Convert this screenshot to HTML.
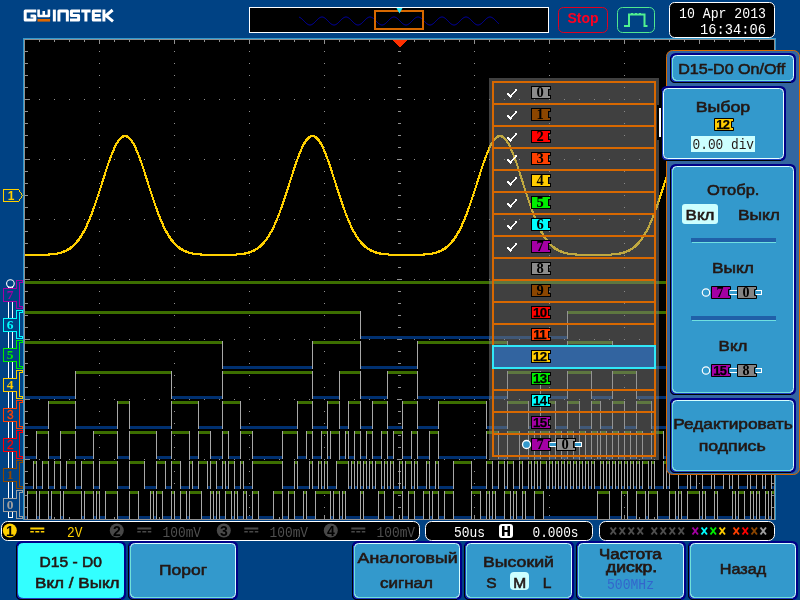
<!DOCTYPE html>
<html><head><meta charset="utf-8"><title>scope</title>
<style>html,body{margin:0;padding:0;background:#004284;overflow:hidden}svg{display:block;will-change:transform;font-family:"Liberation Sans",sans-serif}</style></head>
<body>
<svg width="800" height="600" viewBox="0 0 800 600" shape-rendering="crispEdges">
<rect width="800" height="600" fill="#004284"/>
<g shape-rendering="geometricPrecision">
<g fill="none" stroke="#fff" stroke-width="3" stroke-linecap="butt" stroke-linejoin="round"><path d="M36.2,11H25.2V20.1H34.8V15.9H30.5"/><path d="M38.6,9.6V16H48.9V9.6M43.75,11V16" stroke-width="2.6"/><path d="M54.35,9.6V21.5"/><path d="M58.9,21.5V11H67.35V21.5"/><path d="M80,11H71.4V15.6H78.6V20.1H70"/><path d="M81.25,11H90.6M85.9,11V21.5"/><path d="M101.25,11H93.3V20.1H101.25M93.3,15.6H100.5"/><path d="M103.9,9.6V21.5M112.6,10L106,15.6L113,21.3"/></g>
<rect x="37.5" y="19" width="12.6" height="2.6" fill="#e06800"/>
<rect x="249.5" y="7.5" width="299" height="25" fill="#000" stroke="#fff" stroke-width="1"/>
<polyline points="299.0,17.14 299.5,17.30 300.0,17.54 300.5,17.83 301.0,18.17 301.5,18.56 302.0,19.00 302.5,19.47 303.0,19.96 303.5,20.48 304.0,21.00 304.5,21.52 305.0,22.04 305.5,22.53 306.0,23.00 306.5,23.44 307.0,23.83 307.5,24.17 308.0,24.46 308.5,24.70 309.0,24.86 309.5,24.97 310.0,25.00 310.5,24.97 311.0,24.86 311.5,24.70 312.0,24.46 312.5,24.17 313.0,23.83 313.5,23.44 314.0,23.00 314.5,22.53 315.0,22.04 315.5,21.52 316.0,21.00 316.5,20.48 317.0,19.96 317.5,19.47 318.0,19.00 318.5,18.56 319.0,18.17 319.5,17.83 320.0,17.54 320.5,17.30 321.0,17.14 321.5,17.03 322.0,17.00 322.5,17.03 323.0,17.14 323.5,17.30 324.0,17.54 324.5,17.83 325.0,18.17 325.5,18.56 326.0,19.00 326.5,19.47 327.0,19.96 327.5,20.48 328.0,21.00 328.5,21.52 329.0,22.04 329.5,22.53 330.0,23.00 330.5,23.44 331.0,23.83 331.5,24.17 332.0,24.46 332.5,24.70 333.0,24.86 333.5,24.97 334.0,25.00 334.5,24.97 335.0,24.86 335.5,24.70 336.0,24.46 336.5,24.17 337.0,23.83 337.5,23.44 338.0,23.00 338.5,22.53 339.0,22.04 339.5,21.52 340.0,21.00 340.5,20.48 341.0,19.96 341.5,19.47 342.0,19.00 342.5,18.56 343.0,18.17 343.5,17.83 344.0,17.54 344.5,17.30 345.0,17.14 345.5,17.03 346.0,17.00 346.5,17.03 347.0,17.14 347.5,17.30 348.0,17.54 348.5,17.83 349.0,18.17 349.5,18.56 350.0,19.00 350.5,19.47 351.0,19.96 351.5,20.48 352.0,21.00 352.5,21.52 353.0,22.04 353.5,22.53 354.0,23.00 354.5,23.44 355.0,23.83 355.5,24.17 356.0,24.46 356.5,24.70 357.0,24.86 357.5,24.97 358.0,25.00 358.5,24.97 359.0,24.86 359.5,24.70 360.0,24.46 360.5,24.17 361.0,23.83 361.5,23.44 362.0,23.00 362.5,22.53 363.0,22.04 363.5,21.52 364.0,21.00 364.5,20.48 365.0,19.96 365.5,19.47 366.0,19.00 366.5,18.56 367.0,18.17 367.5,17.83 368.0,17.54 368.5,17.30 369.0,17.14 369.5,17.03 370.0,17.00 370.5,17.03 371.0,17.14 371.5,17.30 372.0,17.54 372.5,17.83 373.0,18.17 373.5,18.56 374.0,19.00 374.5,19.47 375.0,19.96 375.5,20.48 376.0,21.00 376.5,21.52 377.0,22.04 377.5,22.53 378.0,23.00 378.5,23.44 379.0,23.83 379.5,24.17 380.0,24.46 380.5,24.70 381.0,24.86 381.5,24.97 382.0,25.00 382.5,24.97 383.0,24.86 383.5,24.70 384.0,24.46 384.5,24.17 385.0,23.83 385.5,23.44 386.0,23.00 386.5,22.53 387.0,22.04 387.5,21.52 388.0,21.00 388.5,20.48 389.0,19.96 389.5,19.47 390.0,19.00 390.5,18.56 391.0,18.17 391.5,17.83 392.0,17.54 392.5,17.30 393.0,17.14 393.5,17.03 394.0,17.00 394.5,17.03 395.0,17.14 395.5,17.30 396.0,17.54 396.5,17.83 397.0,18.17 397.5,18.56 398.0,19.00 398.5,19.47 399.0,19.96 399.5,20.48 400.0,21.00 400.5,21.52 401.0,22.04 401.5,22.53 402.0,23.00 402.5,23.44 403.0,23.83 403.5,24.17 404.0,24.46 404.5,24.70 405.0,24.86 405.5,24.97 406.0,25.00 406.5,24.97 407.0,24.86 407.5,24.70 408.0,24.46 408.5,24.17 409.0,23.83 409.5,23.44 410.0,23.00 410.5,22.53 411.0,22.04 411.5,21.52 412.0,21.00 412.5,20.48 413.0,19.96 413.5,19.47 414.0,19.00 414.5,18.56 415.0,18.17 415.5,17.83 416.0,17.54 416.5,17.30 417.0,17.14 417.5,17.03 418.0,17.00 418.5,17.03 419.0,17.14 419.5,17.30 420.0,17.54 420.5,17.83 421.0,18.17 421.5,18.56 422.0,19.00 422.5,19.47 423.0,19.96 423.5,20.48 424.0,21.00 424.5,21.52 425.0,22.04 425.5,22.53 426.0,23.00 426.5,23.44 427.0,23.83 427.5,24.17 428.0,24.46 428.5,24.70 429.0,24.86 429.5,24.97 430.0,25.00 430.5,24.97 431.0,24.86 431.5,24.70 432.0,24.46 432.5,24.17 433.0,23.83 433.5,23.44 434.0,23.00 434.5,22.53 435.0,22.04 435.5,21.52 436.0,21.00 436.5,20.48 437.0,19.96 437.5,19.47 438.0,19.00 438.5,18.56 439.0,18.17 439.5,17.83 440.0,17.54 440.5,17.30 441.0,17.14 441.5,17.03 442.0,17.00 442.5,17.03 443.0,17.14 443.5,17.30 444.0,17.54 444.5,17.83 445.0,18.17 445.5,18.56 446.0,19.00 446.5,19.47 447.0,19.96 447.5,20.48 448.0,21.00 448.5,21.52 449.0,22.04 449.5,22.53 450.0,23.00 450.5,23.44 451.0,23.83 451.5,24.17 452.0,24.46 452.5,24.70 453.0,24.86 453.5,24.97 454.0,25.00 454.5,24.97 455.0,24.86 455.5,24.70 456.0,24.46 456.5,24.17 457.0,23.83 457.5,23.44 458.0,23.00 458.5,22.53 459.0,22.04 459.5,21.52 460.0,21.00 460.5,20.48 461.0,19.96 461.5,19.47 462.0,19.00 462.5,18.56 463.0,18.17 463.5,17.83 464.0,17.54 464.5,17.30 465.0,17.14 465.5,17.03 466.0,17.00 466.5,17.03 467.0,17.14 467.5,17.30 468.0,17.54 468.5,17.83 469.0,18.17 469.5,18.56 470.0,19.00 470.5,19.47 471.0,19.96 471.5,20.48 472.0,21.00 472.5,21.52 473.0,22.04 473.5,22.53 474.0,23.00 474.5,23.44 475.0,23.83 475.5,24.17 476.0,24.46 476.5,24.70 477.0,24.86 477.5,24.97 478.0,25.00 478.5,24.97 479.0,24.86 479.5,24.70 480.0,24.46 480.5,24.17 481.0,23.83 481.5,23.44 482.0,23.00 482.5,22.53 483.0,22.04 483.5,21.52 484.0,21.00 484.5,20.48 485.0,19.96 485.5,19.47 486.0,19.00 486.5,18.56 487.0,18.17 487.5,17.83 488.0,17.54 488.5,17.30 489.0,17.14 489.5,17.03 490.0,17.00 490.5,17.03 491.0,17.14 491.5,17.30 492.0,17.54 492.5,17.83 493.0,18.17 493.5,18.56 494.0,19.00 494.5,19.47 495.0,19.96 495.5,20.48 496.0,21.00 496.5,21.52 497.0,22.04 497.5,22.53 498.0,23.00 498.5,23.44 499.0,23.83" fill="none" stroke="#0000b0" stroke-width="1"/>
<rect x="375" y="11" width="48" height="18" fill="none" stroke="#d86800" stroke-width="2"/>
<path d="M396.5,8H402.5L399.5,13.5Z" fill="#30e8f8"/>
<rect x="558.5" y="7.5" width="49" height="25" rx="5" fill="none" stroke="#e00020" stroke-width="1"/>
<text x="583" y="23.3" text-anchor="middle" font-family="Liberation Sans" font-weight="bold" font-size="14" fill="#ff0020">Stop</text>
<rect x="617.5" y="7.5" width="37" height="25" rx="5" fill="none" stroke="#50e890" stroke-width="1"/>
<path d="M624,26H629V14.5H644.5V26H647.5" fill="none" stroke="#50f090" stroke-width="2"/>
<path d="M631,13h2v1h-2zM635,13h2v1h-2zM639,13h2v1h-2z" fill="#50f090"/>
<rect x="669.5" y="2.5" width="105" height="35" rx="5" fill="#000" stroke="#fff" stroke-width="1"/>
<text x="766" y="18" text-anchor="end" font-family="Liberation Mono" font-size="14.5" fill="#fff" textLength="87" lengthAdjust="spacingAndGlyphs">10 Apr 2013</text>
<text x="766" y="33.5" text-anchor="end" font-family="Liberation Mono" font-size="14.5" fill="#fff" textLength="66" lengthAdjust="spacingAndGlyphs">16:34:06</text>
</g>
<rect x="23" y="38" width="753" height="482" fill="#3399cc"/>
<rect x="24" y="39" width="751" height="481" fill="#909090"/>
<rect x="25" y="40" width="749" height="479" fill="#000"/>
<path fill="#909090" d="M39,99h1v1h-1zM54,99h1v1h-1zM69,99h1v1h-1zM84,99h1v1h-1zM99,99h1v1h-1zM114,99h1v1h-1zM129,99h1v1h-1zM144,99h1v1h-1zM159,99h1v1h-1zM174,99h1v1h-1zM189,99h1v1h-1zM204,99h1v1h-1zM219,99h1v1h-1zM234,99h1v1h-1zM249,99h1v1h-1zM264,99h1v1h-1zM279,99h1v1h-1zM294,99h1v1h-1zM309,99h1v1h-1zM324,99h1v1h-1zM339,99h1v1h-1zM354,99h1v1h-1zM369,99h1v1h-1zM384,99h1v1h-1zM414,99h1v1h-1zM429,99h1v1h-1zM444,99h1v1h-1zM459,99h1v1h-1zM474,99h1v1h-1zM489,99h1v1h-1zM504,99h1v1h-1zM519,99h1v1h-1zM534,99h1v1h-1zM549,99h1v1h-1zM564,99h1v1h-1zM579,99h1v1h-1zM594,99h1v1h-1zM609,99h1v1h-1zM624,99h1v1h-1zM639,99h1v1h-1zM654,99h1v1h-1zM669,99h1v1h-1zM684,99h1v1h-1zM699,99h1v1h-1zM714,99h1v1h-1zM729,99h1v1h-1zM744,99h1v1h-1zM759,99h1v1h-1zM39,159h1v1h-1zM54,159h1v1h-1zM69,159h1v1h-1zM84,159h1v1h-1zM99,159h1v1h-1zM114,159h1v1h-1zM129,159h1v1h-1zM144,159h1v1h-1zM159,159h1v1h-1zM174,159h1v1h-1zM189,159h1v1h-1zM204,159h1v1h-1zM219,159h1v1h-1zM234,159h1v1h-1zM249,159h1v1h-1zM264,159h1v1h-1zM279,159h1v1h-1zM294,159h1v1h-1zM309,159h1v1h-1zM324,159h1v1h-1zM339,159h1v1h-1zM354,159h1v1h-1zM369,159h1v1h-1zM384,159h1v1h-1zM414,159h1v1h-1zM429,159h1v1h-1zM444,159h1v1h-1zM459,159h1v1h-1zM474,159h1v1h-1zM489,159h1v1h-1zM504,159h1v1h-1zM519,159h1v1h-1zM534,159h1v1h-1zM549,159h1v1h-1zM564,159h1v1h-1zM579,159h1v1h-1zM594,159h1v1h-1zM609,159h1v1h-1zM624,159h1v1h-1zM639,159h1v1h-1zM654,159h1v1h-1zM669,159h1v1h-1zM684,159h1v1h-1zM699,159h1v1h-1zM714,159h1v1h-1zM729,159h1v1h-1zM744,159h1v1h-1zM759,159h1v1h-1zM39,219h1v1h-1zM54,219h1v1h-1zM69,219h1v1h-1zM84,219h1v1h-1zM99,219h1v1h-1zM114,219h1v1h-1zM129,219h1v1h-1zM144,219h1v1h-1zM159,219h1v1h-1zM174,219h1v1h-1zM189,219h1v1h-1zM204,219h1v1h-1zM219,219h1v1h-1zM234,219h1v1h-1zM249,219h1v1h-1zM264,219h1v1h-1zM279,219h1v1h-1zM294,219h1v1h-1zM309,219h1v1h-1zM324,219h1v1h-1zM339,219h1v1h-1zM354,219h1v1h-1zM369,219h1v1h-1zM384,219h1v1h-1zM414,219h1v1h-1zM429,219h1v1h-1zM444,219h1v1h-1zM459,219h1v1h-1zM474,219h1v1h-1zM489,219h1v1h-1zM504,219h1v1h-1zM519,219h1v1h-1zM534,219h1v1h-1zM549,219h1v1h-1zM564,219h1v1h-1zM579,219h1v1h-1zM594,219h1v1h-1zM609,219h1v1h-1zM624,219h1v1h-1zM639,219h1v1h-1zM654,219h1v1h-1zM669,219h1v1h-1zM684,219h1v1h-1zM699,219h1v1h-1zM714,219h1v1h-1zM729,219h1v1h-1zM744,219h1v1h-1zM759,219h1v1h-1zM39,279h1v1h-1zM54,279h1v1h-1zM69,279h1v1h-1zM84,279h1v1h-1zM99,279h1v1h-1zM114,279h1v1h-1zM129,279h1v1h-1zM144,279h1v1h-1zM159,279h1v1h-1zM174,279h1v1h-1zM189,279h1v1h-1zM204,279h1v1h-1zM219,279h1v1h-1zM234,279h1v1h-1zM249,279h1v1h-1zM264,279h1v1h-1zM279,279h1v1h-1zM294,279h1v1h-1zM309,279h1v1h-1zM324,279h1v1h-1zM339,279h1v1h-1zM354,279h1v1h-1zM369,279h1v1h-1zM384,279h1v1h-1zM414,279h1v1h-1zM429,279h1v1h-1zM444,279h1v1h-1zM459,279h1v1h-1zM474,279h1v1h-1zM489,279h1v1h-1zM504,279h1v1h-1zM519,279h1v1h-1zM534,279h1v1h-1zM549,279h1v1h-1zM564,279h1v1h-1zM579,279h1v1h-1zM594,279h1v1h-1zM609,279h1v1h-1zM624,279h1v1h-1zM639,279h1v1h-1zM654,279h1v1h-1zM669,279h1v1h-1zM684,279h1v1h-1zM699,279h1v1h-1zM714,279h1v1h-1zM729,279h1v1h-1zM744,279h1v1h-1zM759,279h1v1h-1zM39,339h1v1h-1zM54,339h1v1h-1zM69,339h1v1h-1zM84,339h1v1h-1zM99,339h1v1h-1zM114,339h1v1h-1zM129,339h1v1h-1zM144,339h1v1h-1zM159,339h1v1h-1zM174,339h1v1h-1zM189,339h1v1h-1zM204,339h1v1h-1zM219,339h1v1h-1zM234,339h1v1h-1zM249,339h1v1h-1zM264,339h1v1h-1zM279,339h1v1h-1zM294,339h1v1h-1zM309,339h1v1h-1zM324,339h1v1h-1zM339,339h1v1h-1zM354,339h1v1h-1zM369,339h1v1h-1zM384,339h1v1h-1zM414,339h1v1h-1zM429,339h1v1h-1zM444,339h1v1h-1zM459,339h1v1h-1zM474,339h1v1h-1zM489,339h1v1h-1zM504,339h1v1h-1zM519,339h1v1h-1zM534,339h1v1h-1zM549,339h1v1h-1zM564,339h1v1h-1zM579,339h1v1h-1zM594,339h1v1h-1zM609,339h1v1h-1zM624,339h1v1h-1zM639,339h1v1h-1zM654,339h1v1h-1zM669,339h1v1h-1zM684,339h1v1h-1zM699,339h1v1h-1zM714,339h1v1h-1zM729,339h1v1h-1zM744,339h1v1h-1zM759,339h1v1h-1zM39,399h1v1h-1zM54,399h1v1h-1zM69,399h1v1h-1zM84,399h1v1h-1zM99,399h1v1h-1zM114,399h1v1h-1zM129,399h1v1h-1zM144,399h1v1h-1zM159,399h1v1h-1zM174,399h1v1h-1zM189,399h1v1h-1zM204,399h1v1h-1zM219,399h1v1h-1zM234,399h1v1h-1zM249,399h1v1h-1zM264,399h1v1h-1zM279,399h1v1h-1zM294,399h1v1h-1zM309,399h1v1h-1zM324,399h1v1h-1zM339,399h1v1h-1zM354,399h1v1h-1zM369,399h1v1h-1zM384,399h1v1h-1zM414,399h1v1h-1zM429,399h1v1h-1zM444,399h1v1h-1zM459,399h1v1h-1zM474,399h1v1h-1zM489,399h1v1h-1zM504,399h1v1h-1zM519,399h1v1h-1zM534,399h1v1h-1zM549,399h1v1h-1zM564,399h1v1h-1zM579,399h1v1h-1zM594,399h1v1h-1zM609,399h1v1h-1zM624,399h1v1h-1zM639,399h1v1h-1zM654,399h1v1h-1zM669,399h1v1h-1zM684,399h1v1h-1zM699,399h1v1h-1zM714,399h1v1h-1zM729,399h1v1h-1zM744,399h1v1h-1zM759,399h1v1h-1zM39,459h1v1h-1zM54,459h1v1h-1zM69,459h1v1h-1zM84,459h1v1h-1zM99,459h1v1h-1zM114,459h1v1h-1zM129,459h1v1h-1zM144,459h1v1h-1zM159,459h1v1h-1zM174,459h1v1h-1zM189,459h1v1h-1zM204,459h1v1h-1zM219,459h1v1h-1zM234,459h1v1h-1zM249,459h1v1h-1zM264,459h1v1h-1zM279,459h1v1h-1zM294,459h1v1h-1zM309,459h1v1h-1zM324,459h1v1h-1zM339,459h1v1h-1zM354,459h1v1h-1zM369,459h1v1h-1zM384,459h1v1h-1zM414,459h1v1h-1zM429,459h1v1h-1zM444,459h1v1h-1zM459,459h1v1h-1zM474,459h1v1h-1zM489,459h1v1h-1zM504,459h1v1h-1zM519,459h1v1h-1zM534,459h1v1h-1zM549,459h1v1h-1zM564,459h1v1h-1zM579,459h1v1h-1zM594,459h1v1h-1zM609,459h1v1h-1zM624,459h1v1h-1zM639,459h1v1h-1zM654,459h1v1h-1zM669,459h1v1h-1zM684,459h1v1h-1zM699,459h1v1h-1zM714,459h1v1h-1zM729,459h1v1h-1zM744,459h1v1h-1zM759,459h1v1h-1zM99,51h1v1h-1zM99,63h1v1h-1zM99,75h1v1h-1zM99,87h1v1h-1zM99,111h1v1h-1zM99,123h1v1h-1zM99,135h1v1h-1zM99,147h1v1h-1zM99,171h1v1h-1zM99,183h1v1h-1zM99,195h1v1h-1zM99,207h1v1h-1zM99,231h1v1h-1zM99,243h1v1h-1zM99,255h1v1h-1zM99,267h1v1h-1zM99,291h1v1h-1zM99,303h1v1h-1zM99,315h1v1h-1zM99,327h1v1h-1zM99,351h1v1h-1zM99,363h1v1h-1zM99,375h1v1h-1zM99,387h1v1h-1zM99,411h1v1h-1zM99,423h1v1h-1zM99,435h1v1h-1zM99,447h1v1h-1zM99,471h1v1h-1zM99,483h1v1h-1zM99,495h1v1h-1zM99,507h1v1h-1zM174,51h1v1h-1zM174,63h1v1h-1zM174,75h1v1h-1zM174,87h1v1h-1zM174,111h1v1h-1zM174,123h1v1h-1zM174,135h1v1h-1zM174,147h1v1h-1zM174,171h1v1h-1zM174,183h1v1h-1zM174,195h1v1h-1zM174,207h1v1h-1zM174,231h1v1h-1zM174,243h1v1h-1zM174,255h1v1h-1zM174,267h1v1h-1zM174,291h1v1h-1zM174,303h1v1h-1zM174,315h1v1h-1zM174,327h1v1h-1zM174,351h1v1h-1zM174,363h1v1h-1zM174,375h1v1h-1zM174,387h1v1h-1zM174,411h1v1h-1zM174,423h1v1h-1zM174,435h1v1h-1zM174,447h1v1h-1zM174,471h1v1h-1zM174,483h1v1h-1zM174,495h1v1h-1zM174,507h1v1h-1zM249,51h1v1h-1zM249,63h1v1h-1zM249,75h1v1h-1zM249,87h1v1h-1zM249,111h1v1h-1zM249,123h1v1h-1zM249,135h1v1h-1zM249,147h1v1h-1zM249,171h1v1h-1zM249,183h1v1h-1zM249,195h1v1h-1zM249,207h1v1h-1zM249,231h1v1h-1zM249,243h1v1h-1zM249,255h1v1h-1zM249,267h1v1h-1zM249,291h1v1h-1zM249,303h1v1h-1zM249,315h1v1h-1zM249,327h1v1h-1zM249,351h1v1h-1zM249,363h1v1h-1zM249,375h1v1h-1zM249,387h1v1h-1zM249,411h1v1h-1zM249,423h1v1h-1zM249,435h1v1h-1zM249,447h1v1h-1zM249,471h1v1h-1zM249,483h1v1h-1zM249,495h1v1h-1zM249,507h1v1h-1zM324,51h1v1h-1zM324,63h1v1h-1zM324,75h1v1h-1zM324,87h1v1h-1zM324,111h1v1h-1zM324,123h1v1h-1zM324,135h1v1h-1zM324,147h1v1h-1zM324,171h1v1h-1zM324,183h1v1h-1zM324,195h1v1h-1zM324,207h1v1h-1zM324,231h1v1h-1zM324,243h1v1h-1zM324,255h1v1h-1zM324,267h1v1h-1zM324,291h1v1h-1zM324,303h1v1h-1zM324,315h1v1h-1zM324,327h1v1h-1zM324,351h1v1h-1zM324,363h1v1h-1zM324,375h1v1h-1zM324,387h1v1h-1zM324,411h1v1h-1zM324,423h1v1h-1zM324,435h1v1h-1zM324,447h1v1h-1zM324,471h1v1h-1zM324,483h1v1h-1zM324,495h1v1h-1zM324,507h1v1h-1zM474,51h1v1h-1zM474,63h1v1h-1zM474,75h1v1h-1zM474,87h1v1h-1zM474,111h1v1h-1zM474,123h1v1h-1zM474,135h1v1h-1zM474,147h1v1h-1zM474,171h1v1h-1zM474,183h1v1h-1zM474,195h1v1h-1zM474,207h1v1h-1zM474,231h1v1h-1zM474,243h1v1h-1zM474,255h1v1h-1zM474,267h1v1h-1zM474,291h1v1h-1zM474,303h1v1h-1zM474,315h1v1h-1zM474,327h1v1h-1zM474,351h1v1h-1zM474,363h1v1h-1zM474,375h1v1h-1zM474,387h1v1h-1zM474,411h1v1h-1zM474,423h1v1h-1zM474,435h1v1h-1zM474,447h1v1h-1zM474,471h1v1h-1zM474,483h1v1h-1zM474,495h1v1h-1zM474,507h1v1h-1zM549,51h1v1h-1zM549,63h1v1h-1zM549,75h1v1h-1zM549,87h1v1h-1zM549,111h1v1h-1zM549,123h1v1h-1zM549,135h1v1h-1zM549,147h1v1h-1zM549,171h1v1h-1zM549,183h1v1h-1zM549,195h1v1h-1zM549,207h1v1h-1zM549,231h1v1h-1zM549,243h1v1h-1zM549,255h1v1h-1zM549,267h1v1h-1zM549,291h1v1h-1zM549,303h1v1h-1zM549,315h1v1h-1zM549,327h1v1h-1zM549,351h1v1h-1zM549,363h1v1h-1zM549,375h1v1h-1zM549,387h1v1h-1zM549,411h1v1h-1zM549,423h1v1h-1zM549,435h1v1h-1zM549,447h1v1h-1zM549,471h1v1h-1zM549,483h1v1h-1zM549,495h1v1h-1zM549,507h1v1h-1zM624,51h1v1h-1zM624,63h1v1h-1zM624,75h1v1h-1zM624,87h1v1h-1zM624,111h1v1h-1zM624,123h1v1h-1zM624,135h1v1h-1zM624,147h1v1h-1zM624,171h1v1h-1zM624,183h1v1h-1zM624,195h1v1h-1zM624,207h1v1h-1zM624,231h1v1h-1zM624,243h1v1h-1zM624,255h1v1h-1zM624,267h1v1h-1zM624,291h1v1h-1zM624,303h1v1h-1zM624,315h1v1h-1zM624,327h1v1h-1zM624,351h1v1h-1zM624,363h1v1h-1zM624,375h1v1h-1zM624,387h1v1h-1zM624,411h1v1h-1zM624,423h1v1h-1zM624,435h1v1h-1zM624,447h1v1h-1zM624,471h1v1h-1zM624,483h1v1h-1zM624,495h1v1h-1zM624,507h1v1h-1zM699,51h1v1h-1zM699,63h1v1h-1zM699,75h1v1h-1zM699,87h1v1h-1zM699,111h1v1h-1zM699,123h1v1h-1zM699,135h1v1h-1zM699,147h1v1h-1zM699,171h1v1h-1zM699,183h1v1h-1zM699,195h1v1h-1zM699,207h1v1h-1zM699,231h1v1h-1zM699,243h1v1h-1zM699,255h1v1h-1zM699,267h1v1h-1zM699,291h1v1h-1zM699,303h1v1h-1zM699,315h1v1h-1zM699,327h1v1h-1zM699,351h1v1h-1zM699,363h1v1h-1zM699,375h1v1h-1zM699,387h1v1h-1zM699,411h1v1h-1zM699,423h1v1h-1zM699,435h1v1h-1zM699,447h1v1h-1zM699,471h1v1h-1zM699,483h1v1h-1zM699,495h1v1h-1zM699,507h1v1h-1zM39,40h1v2h-1zM39,517h1v2h-1zM54,40h1v2h-1zM54,517h1v2h-1zM69,40h1v2h-1zM69,517h1v2h-1zM84,40h1v2h-1zM84,517h1v2h-1zM99,40h1v4h-1zM99,515h1v4h-1zM114,40h1v2h-1zM114,517h1v2h-1zM129,40h1v2h-1zM129,517h1v2h-1zM144,40h1v2h-1zM144,517h1v2h-1zM159,40h1v2h-1zM159,517h1v2h-1zM174,40h1v4h-1zM174,515h1v4h-1zM189,40h1v2h-1zM189,517h1v2h-1zM204,40h1v2h-1zM204,517h1v2h-1zM219,40h1v2h-1zM219,517h1v2h-1zM234,40h1v2h-1zM234,517h1v2h-1zM249,40h1v4h-1zM249,515h1v4h-1zM264,40h1v2h-1zM264,517h1v2h-1zM279,40h1v2h-1zM279,517h1v2h-1zM294,40h1v2h-1zM294,517h1v2h-1zM309,40h1v2h-1zM309,517h1v2h-1zM324,40h1v4h-1zM324,515h1v4h-1zM339,40h1v2h-1zM339,517h1v2h-1zM354,40h1v2h-1zM354,517h1v2h-1zM369,40h1v2h-1zM369,517h1v2h-1zM384,40h1v2h-1zM384,517h1v2h-1zM399,40h1v4h-1zM399,515h1v4h-1zM414,40h1v2h-1zM414,517h1v2h-1zM429,40h1v2h-1zM429,517h1v2h-1zM444,40h1v2h-1zM444,517h1v2h-1zM459,40h1v2h-1zM459,517h1v2h-1zM474,40h1v4h-1zM474,515h1v4h-1zM489,40h1v2h-1zM489,517h1v2h-1zM504,40h1v2h-1zM504,517h1v2h-1zM519,40h1v2h-1zM519,517h1v2h-1zM534,40h1v2h-1zM534,517h1v2h-1zM549,40h1v4h-1zM549,515h1v4h-1zM564,40h1v2h-1zM564,517h1v2h-1zM579,40h1v2h-1zM579,517h1v2h-1zM594,40h1v2h-1zM594,517h1v2h-1zM609,40h1v2h-1zM609,517h1v2h-1zM624,40h1v4h-1zM624,515h1v4h-1zM639,40h1v2h-1zM639,517h1v2h-1zM654,40h1v2h-1zM654,517h1v2h-1zM669,40h1v2h-1zM669,517h1v2h-1zM684,40h1v2h-1zM684,517h1v2h-1zM699,40h1v4h-1zM699,515h1v4h-1zM714,40h1v2h-1zM714,517h1v2h-1zM729,40h1v2h-1zM729,517h1v2h-1zM744,40h1v2h-1zM744,517h1v2h-1zM759,40h1v2h-1zM759,517h1v2h-1zM25,51h3v1h-3zM771,51h3v1h-3zM398,51h3v1h-3zM25,63h3v1h-3zM771,63h3v1h-3zM398,63h3v1h-3zM25,75h3v1h-3zM771,75h3v1h-3zM398,75h3v1h-3zM25,87h3v1h-3zM771,87h3v1h-3zM398,87h3v1h-3zM25,99h5v1h-5zM769,99h5v1h-5zM397,99h5v1h-5zM25,111h3v1h-3zM771,111h3v1h-3zM398,111h3v1h-3zM25,123h3v1h-3zM771,123h3v1h-3zM398,123h3v1h-3zM25,135h3v1h-3zM771,135h3v1h-3zM398,135h3v1h-3zM25,147h3v1h-3zM771,147h3v1h-3zM398,147h3v1h-3zM25,159h5v1h-5zM769,159h5v1h-5zM397,159h5v1h-5zM25,171h3v1h-3zM771,171h3v1h-3zM398,171h3v1h-3zM25,183h3v1h-3zM771,183h3v1h-3zM398,183h3v1h-3zM25,195h3v1h-3zM771,195h3v1h-3zM398,195h3v1h-3zM25,207h3v1h-3zM771,207h3v1h-3zM398,207h3v1h-3zM25,219h5v1h-5zM769,219h5v1h-5zM397,219h5v1h-5zM25,231h3v1h-3zM771,231h3v1h-3zM398,231h3v1h-3zM25,243h3v1h-3zM771,243h3v1h-3zM398,243h3v1h-3zM25,255h3v1h-3zM771,255h3v1h-3zM398,255h3v1h-3zM25,267h3v1h-3zM771,267h3v1h-3zM398,267h3v1h-3zM25,279h5v1h-5zM769,279h5v1h-5zM397,279h5v1h-5zM25,291h3v1h-3zM771,291h3v1h-3zM398,291h3v1h-3zM25,303h3v1h-3zM771,303h3v1h-3zM398,303h3v1h-3zM25,315h3v1h-3zM771,315h3v1h-3zM398,315h3v1h-3zM25,327h3v1h-3zM771,327h3v1h-3zM398,327h3v1h-3zM25,339h5v1h-5zM769,339h5v1h-5zM397,339h5v1h-5zM25,351h3v1h-3zM771,351h3v1h-3zM398,351h3v1h-3zM25,363h3v1h-3zM771,363h3v1h-3zM398,363h3v1h-3zM25,375h3v1h-3zM771,375h3v1h-3zM398,375h3v1h-3zM25,387h3v1h-3zM771,387h3v1h-3zM398,387h3v1h-3zM25,399h5v1h-5zM769,399h5v1h-5zM397,399h5v1h-5zM25,411h3v1h-3zM771,411h3v1h-3zM398,411h3v1h-3zM25,423h3v1h-3zM771,423h3v1h-3zM398,423h3v1h-3zM25,435h3v1h-3zM771,435h3v1h-3zM398,435h3v1h-3zM25,447h3v1h-3zM771,447h3v1h-3zM398,447h3v1h-3zM25,459h5v1h-5zM769,459h5v1h-5zM397,459h5v1h-5zM25,471h3v1h-3zM771,471h3v1h-3zM398,471h3v1h-3zM25,483h3v1h-3zM771,483h3v1h-3zM398,483h3v1h-3zM25,495h3v1h-3zM771,495h3v1h-3zM398,495h3v1h-3zM25,507h3v1h-3zM771,507h3v1h-3zM398,507h3v1h-3z"/>
<path fill="#003070" d="M25,516h2v3h-2zM37,516h2v3h-2zM49,516h2v3h-2zM61,516h2v3h-2zM82,516h2v3h-2zM94,516h2v3h-2zM100,516h5v3h-5zM118,516h11v3h-11zM139,516h11v3h-11zM154,516h2v3h-2zM163,516h8v3h-8zM175,516h5v3h-5zM187,516h2v3h-2zM202,516h8v3h-8zM214,516h2v3h-2zM220,516h5v3h-5zM232,516h2v3h-2zM238,516h5v3h-5zM247,516h5v3h-5zM259,516h14v3h-14zM283,516h5v3h-5zM295,516h8v3h-8zM307,516h8v3h-8zM331,516h2v3h-2zM340,516h2v3h-2zM346,516h14v3h-14zM364,516h14v3h-14zM385,516h8v3h-8zM403,516h5v3h-5zM415,516h8v3h-8zM430,516h2v3h-2zM439,516h5v3h-5zM454,516h17v3h-17zM481,516h5v3h-5zM490,516h2v3h-2zM496,516h8v3h-8zM511,516h2v3h-2zM517,516h5v3h-5zM526,516h8v3h-8zM544,516h53v3h-53zM610,516h11v3h-11zM628,516h8v3h-8zM646,516h2v3h-2zM658,516h11v3h-11zM676,516h2v3h-2zM682,516h5v3h-5zM700,516h2v3h-2zM706,516h8v3h-8zM718,516h14v3h-14zM736,516h2v3h-2zM745,516h5v3h-5zM754,516h2v3h-2zM760,516h5v3h-5zM769,516h2v3h-2zM25,486h8v3h-8zM37,486h5v3h-5zM49,486h5v3h-5zM61,486h5v3h-5zM76,486h5v3h-5zM94,486h5v3h-5zM118,486h11v3h-11zM145,486h11v3h-11zM166,486h5v3h-5zM181,486h8v3h-8zM193,486h5v3h-5zM208,486h2v3h-2zM217,486h5v3h-5zM226,486h2v3h-2zM235,486h5v3h-5zM244,486h8v3h-8zM283,486h11v3h-11zM298,486h11v3h-11zM313,486h5v3h-5zM322,486h2v3h-2zM328,486h8v3h-8zM349,486h2v3h-2zM355,486h2v3h-2zM361,486h2v3h-2zM367,486h2v3h-2zM373,486h2v3h-2zM382,486h2v3h-2zM388,486h2v3h-2zM394,486h5v3h-5zM403,486h2v3h-2zM412,486h2v3h-2zM418,486h8v3h-8zM430,486h5v3h-5zM439,486h14v3h-14zM472,486h14v3h-14zM493,486h5v3h-5zM505,486h2v3h-2zM514,486h5v3h-5zM523,486h5v3h-5zM532,486h2v3h-2zM538,486h2v3h-2zM547,486h2v3h-2zM553,486h2v3h-2zM559,486h2v3h-2zM565,486h2v3h-2zM571,486h2v3h-2zM577,486h2v3h-2zM583,486h2v3h-2zM589,486h2v3h-2zM595,486h5v3h-5zM604,486h2v3h-2zM610,486h2v3h-2zM616,486h2v3h-2zM622,486h2v3h-2zM628,486h2v3h-2zM634,486h2v3h-2zM640,486h2v3h-2zM649,486h2v3h-2zM655,486h8v3h-8zM667,486h2v3h-2zM679,486h8v3h-8zM691,486h5v3h-5zM703,486h8v3h-8zM715,486h8v3h-8zM730,486h2v3h-2zM739,486h8v3h-8zM751,486h5v3h-5zM763,486h2v3h-2zM772,486h2v3h-2zM25,456h11v3h-11zM49,456h11v3h-11zM76,456h17v3h-17zM118,456h11v3h-11zM157,456h14v3h-14zM190,456h8v3h-8zM211,456h11v3h-11zM229,456h11v3h-11zM253,456h29v3h-29zM298,456h8v3h-8zM313,456h8v3h-8zM328,456h2v3h-2zM340,456h5v3h-5zM349,456h5v3h-5zM361,456h5v3h-5zM373,456h8v3h-8zM388,456h5v3h-5zM403,456h8v3h-8zM418,456h11v3h-11zM439,456h47v3h-47zM499,456h8v3h-8zM520,456h8v3h-8zM535,456h5v3h-5zM550,456h5v3h-5zM562,456h5v3h-5zM574,456h5v3h-5zM586,456h5v3h-5zM598,456h2v3h-2zM607,456h5v3h-5zM619,456h5v3h-5zM631,456h5v3h-5zM643,456h8v3h-8zM664,456h110v3h-110zM25,426h23v3h-23zM76,426h41v3h-41zM130,426h41v3h-41zM199,426h23v3h-23zM241,426h56v3h-56zM313,426h14v3h-14zM340,426h8v3h-8zM361,426h11v3h-11zM388,426h14v3h-14zM418,426h20v3h-20zM487,426h20v3h-20zM529,426h11v3h-11zM556,426h11v3h-11zM580,426h11v3h-11zM601,426h11v3h-11zM625,426h11v3h-11zM652,426h122v3h-122zM25,396h50v3h-50zM172,396h50v3h-50zM313,396h26v3h-26zM361,396h26v3h-26zM418,396h89v3h-89zM541,396h26v3h-26zM592,396h20v3h-20zM637,396h137v3h-137zM223,366h89v3h-89zM361,366h56v3h-56zM508,366h59v3h-59zM613,366h161v3h-161zM361,336h206v3h-206z"/>
<path fill="#3c6e00" d="M28,491h8v3h-8zM40,491h8v3h-8zM52,491h8v3h-8zM64,491h17v3h-17zM85,491h8v3h-8zM97,491h2v3h-2zM106,491h11v3h-11zM130,491h8v3h-8zM151,491h2v3h-2zM157,491h5v3h-5zM172,491h2v3h-2zM181,491h5v3h-5zM190,491h11v3h-11zM211,491h2v3h-2zM217,491h2v3h-2zM226,491h5v3h-5zM235,491h2v3h-2zM244,491h2v3h-2zM253,491h5v3h-5zM274,491h8v3h-8zM289,491h5v3h-5zM304,491h2v3h-2zM316,491h14v3h-14zM334,491h5v3h-5zM343,491h2v3h-2zM361,491h2v3h-2zM379,491h5v3h-5zM394,491h8v3h-8zM409,491h5v3h-5zM424,491h5v3h-5zM433,491h5v3h-5zM445,491h8v3h-8zM472,491h8v3h-8zM487,491h2v3h-2zM493,491h2v3h-2zM505,491h5v3h-5zM514,491h2v3h-2zM523,491h2v3h-2zM535,491h8v3h-8zM598,491h11v3h-11zM622,491h5v3h-5zM637,491h8v3h-8zM649,491h8v3h-8zM670,491h5v3h-5zM679,491h2v3h-2zM688,491h11v3h-11zM703,491h2v3h-2zM715,491h2v3h-2zM733,491h2v3h-2zM739,491h5v3h-5zM751,491h2v3h-2zM757,491h2v3h-2zM766,491h2v3h-2zM772,491h2v3h-2zM34,461h2v3h-2zM43,461h5v3h-5zM55,461h5v3h-5zM67,461h8v3h-8zM82,461h11v3h-11zM100,461h17v3h-17zM130,461h14v3h-14zM157,461h8v3h-8zM172,461h8v3h-8zM190,461h2v3h-2zM199,461h8v3h-8zM211,461h5v3h-5zM223,461h2v3h-2zM229,461h5v3h-5zM241,461h2v3h-2zM253,461h29v3h-29zM295,461h2v3h-2zM310,461h2v3h-2zM319,461h2v3h-2zM325,461h2v3h-2zM337,461h11v3h-11zM352,461h2v3h-2zM358,461h2v3h-2zM364,461h2v3h-2zM370,461h2v3h-2zM376,461h5v3h-5zM385,461h2v3h-2zM391,461h2v3h-2zM400,461h2v3h-2zM406,461h5v3h-5zM415,461h2v3h-2zM427,461h2v3h-2zM436,461h2v3h-2zM454,461h17v3h-17zM487,461h5v3h-5zM499,461h5v3h-5zM508,461h5v3h-5zM520,461h2v3h-2zM529,461h2v3h-2zM535,461h2v3h-2zM541,461h5v3h-5zM550,461h2v3h-2zM556,461h2v3h-2zM562,461h2v3h-2zM568,461h2v3h-2zM574,461h2v3h-2zM580,461h2v3h-2zM586,461h2v3h-2zM592,461h2v3h-2zM601,461h2v3h-2zM607,461h2v3h-2zM613,461h2v3h-2zM619,461h2v3h-2zM625,461h2v3h-2zM631,461h2v3h-2zM637,461h2v3h-2zM643,461h5v3h-5zM652,461h2v3h-2zM664,461h2v3h-2zM670,461h8v3h-8zM688,461h2v3h-2zM697,461h5v3h-5zM712,461h2v3h-2zM724,461h5v3h-5zM733,461h5v3h-5zM748,461h2v3h-2zM757,461h5v3h-5zM766,461h5v3h-5zM37,431h11v3h-11zM61,431h14v3h-14zM94,431h23v3h-23zM130,431h26v3h-26zM172,431h17v3h-17zM199,431h11v3h-11zM223,431h5v3h-5zM241,431h11v3h-11zM283,431h14v3h-14zM307,431h5v3h-5zM322,431h5v3h-5zM331,431h8v3h-8zM346,431h2v3h-2zM355,431h5v3h-5zM367,431h5v3h-5zM382,431h5v3h-5zM394,431h8v3h-8zM412,431h5v3h-5zM430,431h8v3h-8zM487,431h11v3h-11zM508,431h11v3h-11zM529,431h5v3h-5zM541,431h8v3h-8zM556,431h5v3h-5zM568,431h5v3h-5zM580,431h5v3h-5zM592,431h5v3h-5zM601,431h5v3h-5zM613,431h5v3h-5zM625,431h5v3h-5zM637,431h5v3h-5zM652,431h11v3h-11zM49,401h26v3h-26zM118,401h11v3h-11zM172,401h26v3h-26zM223,401h17v3h-17zM298,401h14v3h-14zM328,401h11v3h-11zM349,401h11v3h-11zM373,401h14v3h-14zM403,401h14v3h-14zM439,401h47v3h-47zM508,401h20v3h-20zM541,401h14v3h-14zM568,401h11v3h-11zM592,401h8v3h-8zM613,401h11v3h-11zM637,401h14v3h-14zM76,371h95v3h-95zM223,371h89v3h-89zM340,371h20v3h-20zM388,371h29v3h-29zM508,371h32v3h-32zM568,371h23v3h-23zM613,371h23v3h-23zM25,341h197v3h-197zM313,341h47v3h-47zM418,341h89v3h-89zM568,341h44v3h-44zM25,311h335v3h-335zM568,311h206v3h-206zM25,281h749v3h-749z"/>
<path fill="#a8a8a8" d="M27,491h1v28h-1zM36,491h1v28h-1zM39,491h1v28h-1zM48,491h1v28h-1zM51,491h1v28h-1zM60,491h1v28h-1zM63,491h1v28h-1zM81,491h1v28h-1zM84,491h1v28h-1zM93,491h1v28h-1zM96,491h1v28h-1zM99,491h1v28h-1zM105,491h1v28h-1zM117,491h1v28h-1zM129,491h1v28h-1zM138,491h1v28h-1zM150,491h1v28h-1zM153,491h1v28h-1zM156,491h1v28h-1zM162,491h1v28h-1zM171,491h1v28h-1zM174,491h1v28h-1zM180,491h1v28h-1zM186,491h1v28h-1zM189,491h1v28h-1zM201,491h1v28h-1zM210,491h1v28h-1zM213,491h1v28h-1zM216,491h1v28h-1zM219,491h1v28h-1zM225,491h1v28h-1zM231,491h1v28h-1zM234,491h1v28h-1zM237,491h1v28h-1zM243,491h1v28h-1zM246,491h1v28h-1zM252,491h1v28h-1zM258,491h1v28h-1zM273,491h1v28h-1zM282,491h1v28h-1zM288,491h1v28h-1zM294,491h1v28h-1zM303,491h1v28h-1zM306,491h1v28h-1zM315,491h1v28h-1zM330,491h1v28h-1zM333,491h1v28h-1zM339,491h1v28h-1zM342,491h1v28h-1zM345,491h1v28h-1zM360,491h1v28h-1zM363,491h1v28h-1zM378,491h1v28h-1zM384,491h1v28h-1zM393,491h1v28h-1zM402,491h1v28h-1zM408,491h1v28h-1zM414,491h1v28h-1zM423,491h1v28h-1zM429,491h1v28h-1zM432,491h1v28h-1zM438,491h1v28h-1zM444,491h1v28h-1zM453,491h1v28h-1zM471,491h1v28h-1zM480,491h1v28h-1zM486,491h1v28h-1zM489,491h1v28h-1zM492,491h1v28h-1zM495,491h1v28h-1zM504,491h1v28h-1zM510,491h1v28h-1zM513,491h1v28h-1zM516,491h1v28h-1zM522,491h1v28h-1zM525,491h1v28h-1zM534,491h1v28h-1zM543,491h1v28h-1zM597,491h1v28h-1zM609,491h1v28h-1zM621,491h1v28h-1zM627,491h1v28h-1zM636,491h1v28h-1zM645,491h1v28h-1zM648,491h1v28h-1zM657,491h1v28h-1zM669,491h1v28h-1zM675,491h1v28h-1zM678,491h1v28h-1zM681,491h1v28h-1zM687,491h1v28h-1zM699,491h1v28h-1zM702,491h1v28h-1zM705,491h1v28h-1zM714,491h1v28h-1zM717,491h1v28h-1zM732,491h1v28h-1zM735,491h1v28h-1zM738,491h1v28h-1zM744,491h1v28h-1zM750,491h1v28h-1zM753,491h1v28h-1zM756,491h1v28h-1zM759,491h1v28h-1zM765,491h1v28h-1zM768,491h1v28h-1zM771,491h1v28h-1zM33,461h1v28h-1zM36,461h1v28h-1zM42,461h1v28h-1zM48,461h1v28h-1zM54,461h1v28h-1zM60,461h1v28h-1zM66,461h1v28h-1zM75,461h1v28h-1zM81,461h1v28h-1zM93,461h1v28h-1zM99,461h1v28h-1zM117,461h1v28h-1zM129,461h1v28h-1zM144,461h1v28h-1zM156,461h1v28h-1zM165,461h1v28h-1zM171,461h1v28h-1zM180,461h1v28h-1zM189,461h1v28h-1zM192,461h1v28h-1zM198,461h1v28h-1zM207,461h1v28h-1zM210,461h1v28h-1zM216,461h1v28h-1zM222,461h1v28h-1zM225,461h1v28h-1zM228,461h1v28h-1zM234,461h1v28h-1zM240,461h1v28h-1zM243,461h1v28h-1zM252,461h1v28h-1zM282,461h1v28h-1zM294,461h1v28h-1zM297,461h1v28h-1zM309,461h1v28h-1zM312,461h1v28h-1zM318,461h1v28h-1zM321,461h1v28h-1zM324,461h1v28h-1zM327,461h1v28h-1zM336,461h1v28h-1zM348,461h1v28h-1zM351,461h1v28h-1zM354,461h1v28h-1zM357,461h1v28h-1zM360,461h1v28h-1zM363,461h1v28h-1zM366,461h1v28h-1zM369,461h1v28h-1zM372,461h1v28h-1zM375,461h1v28h-1zM381,461h1v28h-1zM384,461h1v28h-1zM387,461h1v28h-1zM390,461h1v28h-1zM393,461h1v28h-1zM399,461h1v28h-1zM402,461h1v28h-1zM405,461h1v28h-1zM411,461h1v28h-1zM414,461h1v28h-1zM417,461h1v28h-1zM426,461h1v28h-1zM429,461h1v28h-1zM435,461h1v28h-1zM438,461h1v28h-1zM453,461h1v28h-1zM471,461h1v28h-1zM486,461h1v28h-1zM492,461h1v28h-1zM498,461h1v28h-1zM504,461h1v28h-1zM507,461h1v28h-1zM513,461h1v28h-1zM519,461h1v28h-1zM522,461h1v28h-1zM528,461h1v28h-1zM531,461h1v28h-1zM534,461h1v28h-1zM537,461h1v28h-1zM540,461h1v28h-1zM546,461h1v28h-1zM549,461h1v28h-1zM552,461h1v28h-1zM555,461h1v28h-1zM558,461h1v28h-1zM561,461h1v28h-1zM564,461h1v28h-1zM567,461h1v28h-1zM570,461h1v28h-1zM573,461h1v28h-1zM576,461h1v28h-1zM579,461h1v28h-1zM582,461h1v28h-1zM585,461h1v28h-1zM588,461h1v28h-1zM591,461h1v28h-1zM594,461h1v28h-1zM600,461h1v28h-1zM603,461h1v28h-1zM606,461h1v28h-1zM609,461h1v28h-1zM612,461h1v28h-1zM615,461h1v28h-1zM618,461h1v28h-1zM621,461h1v28h-1zM624,461h1v28h-1zM627,461h1v28h-1zM630,461h1v28h-1zM633,461h1v28h-1zM636,461h1v28h-1zM639,461h1v28h-1zM642,461h1v28h-1zM648,461h1v28h-1zM651,461h1v28h-1zM654,461h1v28h-1zM663,461h1v28h-1zM666,461h1v28h-1zM669,461h1v28h-1zM678,461h1v28h-1zM687,461h1v28h-1zM690,461h1v28h-1zM696,461h1v28h-1zM702,461h1v28h-1zM711,461h1v28h-1zM714,461h1v28h-1zM723,461h1v28h-1zM729,461h1v28h-1zM732,461h1v28h-1zM738,461h1v28h-1zM747,461h1v28h-1zM750,461h1v28h-1zM756,461h1v28h-1zM762,461h1v28h-1zM765,461h1v28h-1zM771,461h1v28h-1zM36,431h1v28h-1zM48,431h1v28h-1zM60,431h1v28h-1zM75,431h1v28h-1zM93,431h1v28h-1zM117,431h1v28h-1zM129,431h1v28h-1zM156,431h1v28h-1zM171,431h1v28h-1zM189,431h1v28h-1zM198,431h1v28h-1zM210,431h1v28h-1zM222,431h1v28h-1zM228,431h1v28h-1zM240,431h1v28h-1zM252,431h1v28h-1zM282,431h1v28h-1zM297,431h1v28h-1zM306,431h1v28h-1zM312,431h1v28h-1zM321,431h1v28h-1zM327,431h1v28h-1zM330,431h1v28h-1zM339,431h1v28h-1zM345,431h1v28h-1zM348,431h1v28h-1zM354,431h1v28h-1zM360,431h1v28h-1zM366,431h1v28h-1zM372,431h1v28h-1zM381,431h1v28h-1zM387,431h1v28h-1zM393,431h1v28h-1zM402,431h1v28h-1zM411,431h1v28h-1zM417,431h1v28h-1zM429,431h1v28h-1zM438,431h1v28h-1zM486,431h1v28h-1zM498,431h1v28h-1zM507,431h1v28h-1zM519,431h1v28h-1zM528,431h1v28h-1zM534,431h1v28h-1zM540,431h1v28h-1zM549,431h1v28h-1zM555,431h1v28h-1zM561,431h1v28h-1zM567,431h1v28h-1zM573,431h1v28h-1zM579,431h1v28h-1zM585,431h1v28h-1zM591,431h1v28h-1zM597,431h1v28h-1zM600,431h1v28h-1zM606,431h1v28h-1zM612,431h1v28h-1zM618,431h1v28h-1zM624,431h1v28h-1zM630,431h1v28h-1zM636,431h1v28h-1zM642,431h1v28h-1zM651,431h1v28h-1zM663,431h1v28h-1zM48,401h1v28h-1zM75,401h1v28h-1zM117,401h1v28h-1zM129,401h1v28h-1zM171,401h1v28h-1zM198,401h1v28h-1zM222,401h1v28h-1zM240,401h1v28h-1zM297,401h1v28h-1zM312,401h1v28h-1zM327,401h1v28h-1zM339,401h1v28h-1zM348,401h1v28h-1zM360,401h1v28h-1zM372,401h1v28h-1zM387,401h1v28h-1zM402,401h1v28h-1zM417,401h1v28h-1zM438,401h1v28h-1zM486,401h1v28h-1zM507,401h1v28h-1zM528,401h1v28h-1zM540,401h1v28h-1zM555,401h1v28h-1zM567,401h1v28h-1zM579,401h1v28h-1zM591,401h1v28h-1zM600,401h1v28h-1zM612,401h1v28h-1zM624,401h1v28h-1zM636,401h1v28h-1zM651,401h1v28h-1zM75,371h1v28h-1zM171,371h1v28h-1zM222,371h1v28h-1zM312,371h1v28h-1zM339,371h1v28h-1zM360,371h1v28h-1zM387,371h1v28h-1zM417,371h1v28h-1zM507,371h1v28h-1zM540,371h1v28h-1zM567,371h1v28h-1zM591,371h1v28h-1zM612,371h1v28h-1zM636,371h1v28h-1zM222,341h1v28h-1zM312,341h1v28h-1zM360,341h1v28h-1zM417,341h1v28h-1zM507,341h1v28h-1zM567,341h1v28h-1zM612,341h1v28h-1zM360,311h1v28h-1zM567,311h1v28h-1z"/>
<path fill="#ffd000" d="M25,254h1v2h-1zM26,254h1v2h-1zM27,254h1v2h-1zM28,254h1v2h-1zM29,254h1v2h-1zM30,254h1v2h-1zM31,254h1v2h-1zM32,254h1v2h-1zM33,254h1v2h-1zM34,254h1v2h-1zM35,254h1v2h-1zM36,254h1v2h-1zM37,254h1v2h-1zM38,254h1v2h-1zM39,254h1v2h-1zM40,254h1v2h-1zM41,254h1v2h-1zM42,254h1v2h-1zM43,254h1v2h-1zM44,254h1v2h-1zM45,254h1v2h-1zM46,254h1v2h-1zM47,254h1v2h-1zM48,253h1v3h-1zM49,253h1v3h-1zM50,253h1v2h-1zM51,253h1v2h-1zM52,253h1v2h-1zM53,253h1v2h-1zM54,253h1v2h-1zM55,253h1v2h-1zM56,253h1v2h-1zM57,252h1v3h-1zM58,252h1v2h-1zM59,252h1v2h-1zM60,252h1v2h-1zM61,251h1v3h-1zM62,251h1v2h-1zM63,250h1v3h-1zM64,250h1v3h-1zM65,250h1v2h-1zM66,249h1v3h-1zM67,248h1v3h-1zM68,248h1v3h-1zM69,247h1v3h-1zM70,246h1v4h-1zM71,246h1v3h-1zM72,245h1v3h-1zM73,244h1v3h-1zM74,243h1v3h-1zM75,242h1v3h-1zM76,240h1v4h-1zM77,239h1v4h-1zM78,238h1v4h-1zM79,236h1v5h-1zM80,235h1v4h-1zM81,233h1v5h-1zM82,231h1v5h-1zM83,230h1v4h-1zM84,228h1v5h-1zM85,226h1v5h-1zM86,223h1v6h-1zM87,221h1v6h-1zM88,219h1v5h-1zM89,216h1v6h-1zM90,214h1v6h-1zM91,211h1v6h-1zM92,208h1v7h-1zM93,206h1v6h-1zM94,203h1v6h-1zM95,200h1v6h-1zM96,197h1v6h-1zM97,194h1v6h-1zM98,191h1v6h-1zM99,188h1v6h-1zM100,185h1v6h-1zM101,181h1v7h-1zM102,178h1v7h-1zM103,175h1v7h-1zM104,172h1v7h-1zM105,169h1v7h-1zM106,166h1v6h-1zM107,163h1v6h-1zM108,160h1v6h-1zM109,157h1v6h-1zM110,155h1v6h-1zM111,152h1v6h-1zM112,150h1v5h-1zM113,147h1v6h-1zM114,145h1v6h-1zM115,143h1v5h-1zM116,142h1v4h-1zM117,140h1v4h-1zM118,139h1v4h-1zM119,138h1v3h-1zM120,137h1v3h-1zM121,136h1v3h-1zM122,135h1v3h-1zM123,135h1v3h-1zM124,135h1v2h-1zM125,135h1v2h-1zM126,135h1v3h-1zM127,135h1v3h-1zM128,136h1v3h-1zM129,137h1v3h-1zM130,138h1v3h-1zM131,139h1v4h-1zM132,140h1v4h-1zM133,142h1v4h-1zM134,143h1v5h-1zM135,145h1v6h-1zM136,147h1v6h-1zM137,150h1v5h-1zM138,152h1v6h-1zM139,155h1v6h-1zM140,157h1v6h-1zM141,160h1v6h-1zM142,163h1v6h-1zM143,166h1v6h-1zM144,169h1v7h-1zM145,172h1v7h-1zM146,175h1v7h-1zM147,178h1v7h-1zM148,181h1v7h-1zM149,185h1v6h-1zM150,188h1v6h-1zM151,191h1v6h-1zM152,194h1v6h-1zM153,197h1v6h-1zM154,200h1v6h-1zM155,203h1v6h-1zM156,206h1v6h-1zM157,208h1v7h-1zM158,211h1v6h-1zM159,214h1v6h-1zM160,216h1v6h-1zM161,219h1v5h-1zM162,221h1v6h-1zM163,223h1v6h-1zM164,226h1v5h-1zM165,228h1v5h-1zM166,230h1v4h-1zM167,231h1v5h-1zM168,233h1v5h-1zM169,235h1v4h-1zM170,236h1v5h-1zM171,238h1v4h-1zM172,239h1v4h-1zM173,240h1v4h-1zM174,242h1v3h-1zM175,243h1v3h-1zM176,244h1v3h-1zM177,245h1v3h-1zM178,246h1v3h-1zM179,246h1v4h-1zM180,247h1v3h-1zM181,248h1v3h-1zM182,248h1v3h-1zM183,249h1v3h-1zM184,250h1v2h-1zM185,250h1v3h-1zM186,250h1v3h-1zM187,251h1v2h-1zM188,251h1v3h-1zM189,252h1v2h-1zM190,252h1v2h-1zM191,252h1v2h-1zM192,252h1v3h-1zM193,253h1v2h-1zM194,253h1v2h-1zM195,253h1v2h-1zM196,253h1v2h-1zM197,253h1v2h-1zM198,253h1v2h-1zM199,253h1v2h-1zM200,253h1v3h-1zM201,253h1v3h-1zM202,254h1v2h-1zM203,254h1v2h-1zM204,254h1v2h-1zM205,254h1v2h-1zM206,254h1v2h-1zM207,254h1v2h-1zM208,254h1v2h-1zM209,254h1v2h-1zM210,254h1v2h-1zM211,254h1v2h-1zM212,254h1v2h-1zM213,254h1v2h-1zM214,254h1v2h-1zM215,254h1v2h-1zM216,254h1v2h-1zM217,254h1v2h-1zM218,254h1v2h-1zM219,254h1v2h-1zM220,254h1v2h-1zM221,254h1v2h-1zM222,254h1v2h-1zM223,254h1v2h-1zM224,254h1v2h-1zM225,254h1v2h-1zM226,254h1v2h-1zM227,254h1v2h-1zM228,254h1v2h-1zM229,254h1v2h-1zM230,254h1v2h-1zM231,254h1v2h-1zM232,254h1v2h-1zM233,254h1v2h-1zM234,254h1v2h-1zM235,254h1v2h-1zM236,253h1v3h-1zM237,253h1v2h-1zM238,253h1v2h-1zM239,253h1v2h-1zM240,253h1v2h-1zM241,253h1v2h-1zM242,253h1v2h-1zM243,253h1v2h-1zM244,252h1v3h-1zM245,252h1v3h-1zM246,252h1v2h-1zM247,252h1v2h-1zM248,251h1v3h-1zM249,251h1v3h-1zM250,251h1v2h-1zM251,250h1v3h-1zM252,250h1v2h-1zM253,249h1v3h-1zM254,249h1v3h-1zM255,248h1v3h-1zM256,248h1v2h-1zM257,247h1v3h-1zM258,246h1v3h-1zM259,245h1v3h-1zM260,244h1v4h-1zM261,243h1v4h-1zM262,242h1v4h-1zM263,241h1v4h-1zM264,240h1v4h-1zM265,239h1v3h-1zM266,237h1v4h-1zM267,236h1v4h-1zM268,234h1v4h-1zM269,232h1v5h-1zM270,231h1v4h-1zM271,229h1v4h-1zM272,227h1v5h-1zM273,225h1v5h-1zM274,222h1v6h-1zM275,220h1v5h-1zM276,218h1v5h-1zM277,215h1v6h-1zM278,213h1v5h-1zM279,210h1v6h-1zM280,207h1v6h-1zM281,204h1v6h-1zM282,201h1v7h-1zM283,198h1v7h-1zM284,195h1v7h-1zM285,192h1v7h-1zM286,189h1v7h-1zM287,186h1v7h-1zM288,183h1v7h-1zM289,180h1v7h-1zM290,177h1v6h-1zM291,174h1v6h-1zM292,170h1v7h-1zM293,167h1v7h-1zM294,164h1v7h-1zM295,161h1v7h-1zM296,159h1v6h-1zM297,156h1v6h-1zM298,153h1v6h-1zM299,151h1v6h-1zM300,149h1v5h-1zM301,146h1v6h-1zM302,144h1v5h-1zM303,142h1v5h-1zM304,141h1v4h-1zM305,139h1v5h-1zM306,138h1v4h-1zM307,137h1v4h-1zM308,136h1v4h-1zM309,136h1v3h-1zM310,135h1v3h-1zM311,135h1v2h-1zM312,135h1v2h-1zM313,135h1v2h-1zM314,135h1v3h-1zM315,136h1v3h-1zM316,136h1v4h-1zM317,137h1v4h-1zM318,138h1v4h-1zM319,139h1v5h-1zM320,141h1v4h-1zM321,142h1v5h-1zM322,144h1v5h-1zM323,146h1v6h-1zM324,149h1v5h-1zM325,151h1v6h-1zM326,153h1v6h-1zM327,156h1v6h-1zM328,159h1v6h-1zM329,161h1v7h-1zM330,164h1v7h-1zM331,167h1v7h-1zM332,170h1v7h-1zM333,174h1v6h-1zM334,177h1v6h-1zM335,180h1v7h-1zM336,183h1v7h-1zM337,186h1v7h-1zM338,189h1v7h-1zM339,192h1v7h-1zM340,195h1v7h-1zM341,198h1v7h-1zM342,201h1v7h-1zM343,204h1v6h-1zM344,207h1v6h-1zM345,210h1v6h-1zM346,213h1v5h-1zM347,215h1v6h-1zM348,218h1v5h-1zM349,220h1v5h-1zM350,222h1v6h-1zM351,225h1v5h-1zM352,227h1v5h-1zM353,229h1v4h-1zM354,231h1v4h-1zM355,232h1v5h-1zM356,234h1v4h-1zM357,236h1v4h-1zM358,237h1v4h-1zM359,239h1v3h-1zM360,240h1v4h-1zM361,241h1v4h-1zM362,242h1v4h-1zM363,243h1v4h-1zM364,244h1v4h-1zM365,245h1v3h-1zM366,246h1v3h-1zM367,247h1v3h-1zM368,248h1v2h-1zM369,248h1v3h-1zM370,249h1v3h-1zM371,249h1v3h-1zM372,250h1v2h-1zM373,250h1v3h-1zM374,251h1v2h-1zM375,251h1v3h-1zM376,251h1v3h-1zM377,252h1v2h-1zM378,252h1v2h-1zM379,252h1v3h-1zM380,252h1v3h-1zM381,253h1v2h-1zM382,253h1v2h-1zM383,253h1v2h-1zM384,253h1v2h-1zM385,253h1v2h-1zM386,253h1v2h-1zM387,253h1v2h-1zM388,253h1v3h-1zM389,254h1v2h-1zM390,254h1v2h-1zM391,254h1v2h-1zM392,254h1v2h-1zM393,254h1v2h-1zM394,254h1v2h-1zM395,254h1v2h-1zM396,254h1v2h-1zM397,254h1v2h-1zM398,254h1v2h-1zM399,254h1v2h-1zM400,254h1v2h-1zM401,254h1v2h-1zM402,254h1v2h-1zM403,254h1v2h-1zM404,254h1v2h-1zM405,254h1v2h-1zM406,254h1v2h-1zM407,254h1v2h-1zM408,254h1v2h-1zM409,254h1v2h-1zM410,254h1v2h-1zM411,254h1v2h-1zM412,254h1v2h-1zM413,254h1v2h-1zM414,254h1v2h-1zM415,254h1v2h-1zM416,254h1v2h-1zM417,254h1v2h-1zM418,254h1v2h-1zM419,254h1v2h-1zM420,254h1v2h-1zM421,254h1v2h-1zM422,254h1v2h-1zM423,253h1v3h-1zM424,253h1v3h-1zM425,253h1v2h-1zM426,253h1v2h-1zM427,253h1v2h-1zM428,253h1v2h-1zM429,253h1v2h-1zM430,253h1v2h-1zM431,253h1v2h-1zM432,252h1v3h-1zM433,252h1v2h-1zM434,252h1v2h-1zM435,252h1v2h-1zM436,251h1v3h-1zM437,251h1v2h-1zM438,250h1v3h-1zM439,250h1v3h-1zM440,250h1v2h-1zM441,249h1v3h-1zM442,248h1v3h-1zM443,248h1v3h-1zM444,247h1v3h-1zM445,246h1v4h-1zM446,246h1v3h-1zM447,245h1v3h-1zM448,244h1v3h-1zM449,243h1v3h-1zM450,242h1v3h-1zM451,240h1v4h-1zM452,239h1v4h-1zM453,238h1v4h-1zM454,236h1v5h-1zM455,235h1v4h-1zM456,233h1v5h-1zM457,231h1v5h-1zM458,230h1v4h-1zM459,228h1v5h-1zM460,226h1v5h-1zM461,223h1v6h-1zM462,221h1v6h-1zM463,219h1v5h-1zM464,216h1v6h-1zM465,214h1v6h-1zM466,211h1v6h-1zM467,208h1v7h-1zM468,206h1v6h-1zM469,203h1v6h-1zM470,200h1v6h-1zM471,197h1v6h-1zM472,194h1v6h-1zM473,191h1v6h-1zM474,188h1v6h-1zM475,185h1v6h-1zM476,181h1v7h-1zM477,178h1v7h-1zM478,175h1v7h-1zM479,172h1v7h-1zM480,169h1v7h-1zM481,166h1v6h-1zM482,163h1v6h-1zM483,160h1v6h-1zM484,157h1v6h-1zM485,155h1v6h-1zM486,152h1v6h-1zM487,150h1v5h-1zM488,147h1v6h-1zM489,145h1v6h-1zM490,143h1v5h-1zM491,142h1v4h-1zM492,140h1v4h-1zM493,139h1v4h-1zM494,138h1v3h-1zM495,137h1v3h-1zM496,136h1v3h-1zM497,135h1v3h-1zM498,135h1v3h-1zM499,135h1v2h-1zM500,135h1v2h-1zM501,135h1v3h-1zM502,135h1v3h-1zM503,136h1v3h-1zM504,137h1v3h-1zM505,138h1v3h-1zM506,139h1v4h-1zM507,140h1v4h-1zM508,142h1v4h-1zM509,143h1v5h-1zM510,145h1v6h-1zM511,147h1v6h-1zM512,150h1v5h-1zM513,152h1v6h-1zM514,155h1v6h-1zM515,157h1v6h-1zM516,160h1v6h-1zM517,163h1v6h-1zM518,166h1v6h-1zM519,169h1v7h-1zM520,172h1v7h-1zM521,175h1v7h-1zM522,178h1v7h-1zM523,181h1v7h-1zM524,185h1v6h-1zM525,188h1v6h-1zM526,191h1v6h-1zM527,194h1v6h-1zM528,197h1v6h-1zM529,200h1v6h-1zM530,203h1v6h-1zM531,206h1v6h-1zM532,208h1v7h-1zM533,211h1v6h-1zM534,214h1v6h-1zM535,216h1v6h-1zM536,219h1v5h-1zM537,221h1v6h-1zM538,223h1v6h-1zM539,226h1v5h-1zM540,228h1v5h-1zM541,230h1v4h-1zM542,231h1v5h-1zM543,233h1v5h-1zM544,235h1v4h-1zM545,236h1v5h-1zM546,238h1v4h-1zM547,239h1v4h-1zM548,240h1v4h-1zM549,242h1v3h-1zM550,243h1v3h-1zM551,244h1v3h-1zM552,245h1v3h-1zM553,246h1v3h-1zM554,246h1v4h-1zM555,247h1v3h-1zM556,248h1v3h-1zM557,248h1v3h-1zM558,249h1v3h-1zM559,250h1v2h-1zM560,250h1v3h-1zM561,250h1v3h-1zM562,251h1v2h-1zM563,251h1v3h-1zM564,252h1v2h-1zM565,252h1v2h-1zM566,252h1v2h-1zM567,252h1v3h-1zM568,253h1v2h-1zM569,253h1v2h-1zM570,253h1v2h-1zM571,253h1v2h-1zM572,253h1v2h-1zM573,253h1v2h-1zM574,253h1v2h-1zM575,253h1v3h-1zM576,253h1v3h-1zM577,254h1v2h-1zM578,254h1v2h-1zM579,254h1v2h-1zM580,254h1v2h-1zM581,254h1v2h-1zM582,254h1v2h-1zM583,254h1v2h-1zM584,254h1v2h-1zM585,254h1v2h-1zM586,254h1v2h-1zM587,254h1v2h-1zM588,254h1v2h-1zM589,254h1v2h-1zM590,254h1v2h-1zM591,254h1v2h-1zM592,254h1v2h-1zM593,254h1v2h-1zM594,254h1v2h-1zM595,254h1v2h-1zM596,254h1v2h-1zM597,254h1v2h-1zM598,254h1v2h-1zM599,254h1v2h-1zM600,254h1v2h-1zM601,254h1v2h-1zM602,254h1v2h-1zM603,254h1v2h-1zM604,254h1v2h-1zM605,254h1v2h-1zM606,254h1v2h-1zM607,254h1v2h-1zM608,254h1v2h-1zM609,254h1v2h-1zM610,254h1v2h-1zM611,253h1v3h-1zM612,253h1v2h-1zM613,253h1v2h-1zM614,253h1v2h-1zM615,253h1v2h-1zM616,253h1v2h-1zM617,253h1v2h-1zM618,253h1v2h-1zM619,252h1v3h-1zM620,252h1v3h-1zM621,252h1v2h-1zM622,252h1v2h-1zM623,251h1v3h-1zM624,251h1v3h-1zM625,251h1v2h-1zM626,250h1v3h-1zM627,250h1v2h-1zM628,249h1v3h-1zM629,249h1v3h-1zM630,248h1v3h-1zM631,248h1v2h-1zM632,247h1v3h-1zM633,246h1v3h-1zM634,245h1v3h-1zM635,244h1v4h-1zM636,243h1v4h-1zM637,242h1v4h-1zM638,241h1v4h-1zM639,240h1v4h-1zM640,239h1v3h-1zM641,237h1v4h-1zM642,236h1v4h-1zM643,234h1v4h-1zM644,232h1v5h-1zM645,231h1v4h-1zM646,229h1v4h-1zM647,227h1v5h-1zM648,225h1v5h-1zM649,222h1v6h-1zM650,220h1v5h-1zM651,218h1v5h-1zM652,215h1v6h-1zM653,213h1v5h-1zM654,210h1v6h-1zM655,207h1v6h-1zM656,204h1v6h-1zM657,201h1v7h-1zM658,198h1v7h-1zM659,195h1v7h-1zM660,192h1v7h-1zM661,189h1v7h-1zM662,186h1v7h-1zM663,183h1v7h-1zM664,180h1v7h-1zM665,177h1v6h-1zM666,174h1v6h-1zM667,170h1v7h-1zM668,167h1v7h-1zM669,164h1v7h-1zM670,161h1v7h-1zM671,159h1v6h-1zM672,156h1v6h-1zM673,153h1v6h-1zM674,151h1v6h-1zM675,149h1v5h-1zM676,146h1v6h-1zM677,144h1v5h-1zM678,142h1v5h-1zM679,141h1v4h-1zM680,139h1v5h-1zM681,138h1v4h-1zM682,137h1v4h-1zM683,136h1v4h-1zM684,136h1v3h-1zM685,135h1v3h-1zM686,135h1v2h-1zM687,135h1v2h-1zM688,135h1v2h-1zM689,135h1v3h-1zM690,136h1v3h-1zM691,136h1v4h-1zM692,137h1v4h-1zM693,138h1v4h-1zM694,139h1v5h-1zM695,141h1v4h-1zM696,142h1v5h-1zM697,144h1v5h-1zM698,146h1v6h-1zM699,149h1v5h-1zM700,151h1v6h-1zM701,153h1v6h-1zM702,156h1v6h-1zM703,159h1v6h-1zM704,161h1v7h-1zM705,164h1v7h-1zM706,167h1v7h-1zM707,170h1v7h-1zM708,174h1v6h-1zM709,177h1v6h-1zM710,180h1v7h-1zM711,183h1v7h-1zM712,186h1v7h-1zM713,189h1v7h-1zM714,192h1v7h-1zM715,195h1v7h-1zM716,198h1v7h-1zM717,201h1v7h-1zM718,204h1v6h-1zM719,207h1v6h-1zM720,210h1v6h-1zM721,213h1v5h-1zM722,215h1v6h-1zM723,218h1v5h-1zM724,220h1v5h-1zM725,222h1v6h-1zM726,225h1v5h-1zM727,227h1v5h-1zM728,229h1v4h-1zM729,231h1v4h-1zM730,232h1v5h-1zM731,234h1v4h-1zM732,236h1v4h-1zM733,237h1v4h-1zM734,239h1v3h-1zM735,240h1v4h-1zM736,241h1v4h-1zM737,242h1v4h-1zM738,243h1v4h-1zM739,244h1v4h-1zM740,245h1v3h-1zM741,246h1v3h-1zM742,247h1v3h-1zM743,248h1v2h-1zM744,248h1v3h-1zM745,249h1v3h-1zM746,249h1v3h-1zM747,250h1v2h-1zM748,250h1v3h-1zM749,251h1v2h-1zM750,251h1v3h-1zM751,251h1v3h-1zM752,252h1v2h-1zM753,252h1v2h-1zM754,252h1v3h-1zM755,252h1v3h-1zM756,253h1v2h-1zM757,253h1v2h-1zM758,253h1v2h-1zM759,253h1v2h-1zM760,253h1v2h-1zM761,253h1v2h-1zM762,253h1v2h-1zM763,253h1v3h-1zM764,254h1v2h-1zM765,254h1v2h-1zM766,254h1v2h-1zM767,254h1v2h-1zM768,254h1v2h-1zM769,254h1v2h-1zM770,254h1v2h-1zM771,254h1v2h-1zM772,254h1v2h-1zM773,254h1v2h-1z"/>
<path d="M392,40H407L399.5,47.5Z" fill="#ff3000"/>
<rect x="489" y="78" width="170" height="382" fill="#808080" fill-opacity="0.5"/>
<rect x="493" y="346" width="162" height="22" fill="#3264a0" stroke="#30e8f8" stroke-width="2"/>
<path fill="#d86800" d="M492,81h164v2h-164zM492,103h164v2h-164zM492,125h164v2h-164zM492,147h164v2h-164zM492,169h164v2h-164zM492,191h164v2h-164zM492,213h164v2h-164zM492,235h164v2h-164zM492,257h164v2h-164zM492,279h164v2h-164zM492,301h164v2h-164zM492,323h164v2h-164zM492,389h164v2h-164zM492,411h164v2h-164zM492,433h164v2h-164zM492,455h164v2h-164zM492,81h2v376h-2zM654,81h2v376h-2z"/>
<rect x="493" y="346" width="162" height="22" fill="none" stroke="#30e8f8" stroke-width="2"/>
<path d="M531.5,86.5H550.5V89.5H548.5V95.5H550.5V98.5H531.5Z" fill="#8c8c8c" stroke="#000" stroke-width="1"/><text x="540.0" y="97" text-anchor="middle" font-family="Liberation Serif" font-weight="bold" font-size="14.5" fill="#000">0</text>
<path d="M507.5,93.5l3,3l6,-7" fill="none" stroke="#fff" stroke-width="1.6"/>
<path d="M531.5,108.5H550.5V111.5H548.5V117.5H550.5V120.5H531.5Z" fill="#8c4600" stroke="#000" stroke-width="1"/><text x="540.0" y="119" text-anchor="middle" font-family="Liberation Serif" font-weight="bold" font-size="14.5" fill="#000">1</text>
<path d="M507.5,115.5l3,3l6,-7" fill="none" stroke="#fff" stroke-width="1.6"/>
<path d="M531.5,130.5H550.5V133.5H548.5V139.5H550.5V142.5H531.5Z" fill="#ff0000" stroke="#000" stroke-width="1"/><text x="540.0" y="141" text-anchor="middle" font-family="Liberation Serif" font-weight="bold" font-size="14.5" fill="#000">2</text>
<path d="M507.5,137.5l3,3l6,-7" fill="none" stroke="#fff" stroke-width="1.6"/>
<path d="M531.5,152.5H550.5V155.5H548.5V161.5H550.5V164.5H531.5Z" fill="#ff4000" stroke="#000" stroke-width="1"/><text x="540.0" y="163" text-anchor="middle" font-family="Liberation Serif" font-weight="bold" font-size="14.5" fill="#000">3</text>
<path d="M507.5,159.5l3,3l6,-7" fill="none" stroke="#fff" stroke-width="1.6"/>
<path d="M531.5,174.5H550.5V177.5H548.5V183.5H550.5V186.5H531.5Z" fill="#ffcc00" stroke="#000" stroke-width="1"/><text x="540.0" y="185" text-anchor="middle" font-family="Liberation Serif" font-weight="bold" font-size="14.5" fill="#000">4</text>
<path d="M507.5,181.5l3,3l6,-7" fill="none" stroke="#fff" stroke-width="1.6"/>
<path d="M531.5,196.5H550.5V199.5H548.5V205.5H550.5V208.5H531.5Z" fill="#00ee00" stroke="#000" stroke-width="1"/><text x="540.0" y="207" text-anchor="middle" font-family="Liberation Serif" font-weight="bold" font-size="14.5" fill="#000">5</text>
<path d="M507.5,203.5l3,3l6,-7" fill="none" stroke="#fff" stroke-width="1.6"/>
<path d="M531.5,218.5H550.5V221.5H548.5V227.5H550.5V230.5H531.5Z" fill="#00ffff" stroke="#000" stroke-width="1"/><text x="540.0" y="229" text-anchor="middle" font-family="Liberation Serif" font-weight="bold" font-size="14.5" fill="#000">6</text>
<path d="M507.5,225.5l3,3l6,-7" fill="none" stroke="#fff" stroke-width="1.6"/>
<path d="M531.5,240.5H550.5V243.5H548.5V249.5H550.5V252.5H531.5Z" fill="#a400a4" stroke="#000" stroke-width="1"/><text x="540.0" y="251" text-anchor="middle" font-family="Liberation Serif" font-weight="bold" font-size="14.5" fill="#000">7</text>
<path d="M507.5,247.5l3,3l6,-7" fill="none" stroke="#fff" stroke-width="1.6"/>
<path d="M531.5,262.5H550.5V265.5H548.5V271.5H550.5V274.5H531.5Z" fill="#8c8c8c" stroke="#000" stroke-width="1"/><text x="540.0" y="273" text-anchor="middle" font-family="Liberation Serif" font-weight="bold" font-size="14.5" fill="#000">8</text>
<path d="M531.5,284.5H550.5V287.5H548.5V293.5H550.5V296.5H531.5Z" fill="#8c4600" stroke="#000" stroke-width="1"/><text x="540.0" y="295" text-anchor="middle" font-family="Liberation Serif" font-weight="bold" font-size="14.5" fill="#000">9</text>
<path d="M531.5,306.5H550.5V309.5H548.5V315.5H550.5V318.5H531.5Z" fill="#ff0000" stroke="#000" stroke-width="1"/><text x="539.7" y="317" text-anchor="middle" font-family="Liberation Sans" font-weight="bold" font-size="13.3" letter-spacing="-0.7" fill="#000" stroke="#000" stroke-width="0.25">10</text>
<path d="M531.5,328.5H550.5V331.5H548.5V337.5H550.5V340.5H531.5Z" fill="#ff4000" stroke="#000" stroke-width="1"/><text x="539.7" y="339" text-anchor="middle" font-family="Liberation Sans" font-weight="bold" font-size="13.3" letter-spacing="-0.7" fill="#000" stroke="#000" stroke-width="0.25">11</text>
<path d="M531.5,350.5H550.5V353.5H548.5V359.5H550.5V362.5H531.5Z" fill="#ffcc00" stroke="#000" stroke-width="1"/><text x="539.7" y="361" text-anchor="middle" font-family="Liberation Sans" font-weight="bold" font-size="13.3" letter-spacing="-0.7" fill="#000" stroke="#000" stroke-width="0.25">12</text>
<path d="M531.5,372.5H550.5V375.5H548.5V381.5H550.5V384.5H531.5Z" fill="#00ee00" stroke="#000" stroke-width="1"/><text x="539.7" y="383" text-anchor="middle" font-family="Liberation Sans" font-weight="bold" font-size="13.3" letter-spacing="-0.7" fill="#000" stroke="#000" stroke-width="0.25">13</text>
<path d="M531.5,394.5H550.5V397.5H548.5V403.5H550.5V406.5H531.5Z" fill="#00ffff" stroke="#000" stroke-width="1"/><text x="539.7" y="405" text-anchor="middle" font-family="Liberation Sans" font-weight="bold" font-size="13.3" letter-spacing="-0.7" fill="#000" stroke="#000" stroke-width="0.25">14</text>
<path d="M531.5,416.5H550.5V419.5H548.5V425.5H550.5V428.5H531.5Z" fill="#a400a4" stroke="#000" stroke-width="1"/><text x="539.7" y="427" text-anchor="middle" font-family="Liberation Sans" font-weight="bold" font-size="13.3" letter-spacing="-0.7" fill="#000" stroke="#000" stroke-width="0.25">15</text>
<circle cx="526.5" cy="444.5" r="4" fill="#3399cc" stroke="#fff" stroke-width="1.3" shape-rendering="geometricPrecision"/>
<rect x="550" y="442" width="7" height="5" fill="#fff"/><rect x="550" y="443" width="7" height="3" fill="#3399cc"/>
<rect x="575" y="442" width="7" height="5" fill="#fff"/><rect x="575" y="443" width="6" height="3" fill="#3399cc"/>
<path d="M531.5,438.5H550.5V441.5H548.5V447.5H550.5V450.5H531.5Z" fill="#a400a4" stroke="#000" stroke-width="1"/><text x="540.0" y="449" text-anchor="middle" font-family="Liberation Serif" font-weight="bold" font-size="14.5" fill="#000">7</text>
<path d="M556.5,438.5H575.5V441.5H573.5V447.5H575.5V450.5H556.5Z" fill="#8c8c8c" stroke="#000" stroke-width="1"/><text x="565.0" y="449" text-anchor="middle" font-family="Liberation Serif" font-weight="bold" font-size="14.5" fill="#000">0</text>
<g shape-rendering="geometricPrecision">
<rect x="666.5" y="50.5" width="133" height="424" rx="6" fill="#3366a0" stroke="#d86800" stroke-width="1"/>
<rect x="670" y="53" width="126" height="30" rx="5.5" fill="#000088"/><path d="M670.5,57.5V78Q670.5,82.5 675,82.5H791" fill="none" stroke="#000" stroke-width="1"/><path d="M671.5,58V77.5Q671.5,81.5 675.5,81.5H791" fill="none" stroke="#2040c0" stroke-width="1"/><rect x="672.5" y="55.5" width="121" height="25" rx="4" fill="#3399cc" stroke="#d8ffff" stroke-width="1"/><path d="M672.5,59V76.5Q672.5,80.5 676.5,80.5H790" fill="none" stroke="#70e0d8" stroke-width="1"/>
<text x="731.7" y="74" text-anchor="middle" font-family="Liberation Sans" font-weight="normal" font-size="15.5" fill="#231815" stroke="#231815" stroke-width="0.6"  textLength="107" lengthAdjust="spacingAndGlyphs">D15-D0 On/Off</text>
<rect x="657" y="105" width="5" height="35" fill="#000"/><rect x="659" y="108" width="2" height="29" fill="#fff"/>
<rect x="661" y="86" width="125" height="75" rx="5.5" fill="#000088"/><path d="M661.5,90.5V156Q661.5,160.5 666,160.5H781" fill="none" stroke="#000" stroke-width="1"/><path d="M662.5,91V155.5Q662.5,159.5 666.5,159.5H781" fill="none" stroke="#2040c0" stroke-width="1"/><rect x="663.5" y="88.5" width="120" height="70" rx="4" fill="#3399cc" stroke="#e8ffff" stroke-width="1"/>
<text x="723" y="111.5" text-anchor="middle" font-family="Liberation Sans" font-weight="normal" font-size="15.5" fill="#231815" stroke="#231815" stroke-width="0.6"  textLength="54.5" lengthAdjust="spacingAndGlyphs">Выбор</text>
<path d="M714.5,118.5H733.5V121.5H731.5V127.5H733.5V130.5H714.5Z" fill="#ffcc00" stroke="#000" stroke-width="1"/><text x="722.7" y="129" text-anchor="middle" font-family="Liberation Sans" font-weight="bold" font-size="12.8" letter-spacing="-0.7" fill="#000" stroke="#000" stroke-width="0.25">12</text>
<rect x="691" y="136" width="64" height="16" fill="#ccffff"/>
<text x="723.3" y="149" text-anchor="middle" font-family="Liberation Mono" font-weight="normal" font-size="14.5" fill="#231815"  textLength="61.5" lengthAdjust="spacingAndGlyphs">0.00 div</text>
<rect x="670" y="164" width="126" height="231" rx="5.5" fill="#000088"/><path d="M670.5,168.5V390Q670.5,394.5 675,394.5H791" fill="none" stroke="#000" stroke-width="1"/><path d="M671.5,169V389.5Q671.5,393.5 675.5,393.5H791" fill="none" stroke="#2040c0" stroke-width="1"/><rect x="672.5" y="166.5" width="121" height="226" rx="4" fill="#3399cc" stroke="#d8ffff" stroke-width="1"/><path d="M672.5,170V388.5Q672.5,392.5 676.5,392.5H790" fill="none" stroke="#70e0d8" stroke-width="1"/>
<text x="733.2" y="195.2" text-anchor="middle" font-family="Liberation Sans" font-weight="normal" font-size="15.5" fill="#231815" stroke="#231815" stroke-width="0.6"  textLength="52.5" lengthAdjust="spacingAndGlyphs">Отобр.</text>
<rect x="682" y="204" width="36" height="20" rx="3" fill="#ccffff"/>
<text x="700" y="219.5" text-anchor="middle" font-family="Liberation Sans" font-weight="normal" font-size="15.5" fill="#231815" stroke="#231815" stroke-width="0.6"  textLength="28.8" lengthAdjust="spacingAndGlyphs">Вкл</text>
<text x="759" y="219.5" text-anchor="middle" font-family="Liberation Sans" font-weight="normal" font-size="15.5" fill="#231815" stroke="#231815" stroke-width="0.6"  textLength="42" lengthAdjust="spacingAndGlyphs">Выкл</text>
<rect x="691" y="238" width="85" height="4" fill="#2060a8"/><rect x="692" y="242" width="84" height="1" fill="#70e0e0"/>
<rect x="691" y="316" width="85" height="4" fill="#2060a8"/><rect x="692" y="320" width="84" height="1" fill="#70e0e0"/>
<text x="733" y="273.3" text-anchor="middle" font-family="Liberation Sans" font-weight="normal" font-size="15.5" fill="#231815" stroke="#231815" stroke-width="0.6"  textLength="42" lengthAdjust="spacingAndGlyphs">Выкл</text>
<circle cx="706" cy="292.5" r="3.7" fill="#3399cc" stroke="#fff" stroke-width="1.2"/><g shape-rendering="crispEdges"><rect x="730" y="290" width="8" height="5" fill="#fff"/><rect x="730" y="291" width="8" height="3" fill="#3399cc"/><rect x="756" y="290" width="6" height="5" fill="#fff"/><rect x="756" y="291" width="5" height="3" fill="#3399cc"/></g><path d="M711.5,286.5H730.5V289.5H728.5V295.5H730.5V298.5H711.5Z" fill="#a400a4" stroke="#000" stroke-width="1"/><text x="720.0" y="297.0" text-anchor="middle" font-family="Liberation Serif" font-weight="bold" font-size="14.0" fill="#000">7</text><path d="M737.5,286.5H756.5V289.5H754.5V295.5H756.5V298.5H737.5Z" fill="#848484" stroke="#000" stroke-width="1"/><text x="746.0" y="297.0" text-anchor="middle" font-family="Liberation Serif" font-weight="bold" font-size="14.0" fill="#000">0</text>
<text x="733" y="351.2" text-anchor="middle" font-family="Liberation Sans" font-weight="normal" font-size="15.5" fill="#231815" stroke="#231815" stroke-width="0.6"  textLength="28.8" lengthAdjust="spacingAndGlyphs">Вкл</text>
<circle cx="706" cy="370.5" r="3.7" fill="#3399cc" stroke="#fff" stroke-width="1.2"/><g shape-rendering="crispEdges"><rect x="730" y="368" width="8" height="5" fill="#fff"/><rect x="730" y="369" width="8" height="3" fill="#3399cc"/><rect x="756" y="368" width="6" height="5" fill="#fff"/><rect x="756" y="369" width="5" height="3" fill="#3399cc"/></g><path d="M711.5,364.5H730.5V367.5H728.5V373.5H730.5V376.5H711.5Z" fill="#a400a4" stroke="#000" stroke-width="1"/><text x="719.7" y="375.0" text-anchor="middle" font-family="Liberation Sans" font-weight="bold" font-size="12.8" letter-spacing="-0.7" fill="#000" stroke="#000" stroke-width="0.25">15</text><path d="M737.5,364.5H756.5V367.5H754.5V373.5H756.5V376.5H737.5Z" fill="#848484" stroke="#000" stroke-width="1"/><text x="746.0" y="375.0" text-anchor="middle" font-family="Liberation Serif" font-weight="bold" font-size="14.0" fill="#000">8</text>
<rect x="670" y="398" width="126" height="75" rx="5.5" fill="#000088"/><path d="M670.5,402.5V468Q670.5,472.5 675,472.5H791" fill="none" stroke="#000" stroke-width="1"/><path d="M671.5,403V467.5Q671.5,471.5 675.5,471.5H791" fill="none" stroke="#2040c0" stroke-width="1"/><rect x="672.5" y="400.5" width="121" height="70" rx="4" fill="#3399cc" stroke="#d8ffff" stroke-width="1"/><path d="M672.5,404V466.5Q672.5,470.5 676.5,470.5H790" fill="none" stroke="#70e0d8" stroke-width="1"/>
<text x="733" y="429.2" text-anchor="middle" font-family="Liberation Sans" font-weight="normal" font-size="15.5" fill="#231815" stroke="#231815" stroke-width="0.6"  textLength="119.5" lengthAdjust="spacingAndGlyphs">Редактировать</text>
<text x="732.2" y="450.8" text-anchor="middle" font-family="Liberation Sans" font-weight="normal" font-size="15.5" fill="#231815" stroke="#231815" stroke-width="0.6"  textLength="67" lengthAdjust="spacingAndGlyphs">подпись</text>
</g>
<rect x="0" y="40" width="23" height="480" fill="#004284"/>
<rect x="776" y="476" width="24" height="45" fill="#004284"/>
<g>
<rect x="8.5" y="286.5" width="4" height="231" fill="none" stroke="#fff" stroke-width="1"/>
<circle cx="10.4" cy="283.6" r="3.8" fill="#004284" stroke="#fff" stroke-width="1.1" shape-rendering="geometricPrecision"/>
<path d="M3.5,498.5H16.5V490.5H22.5V492.5H19.5V516.5H22.5V518.5H16.5V511.5H3.5Z" fill="#004284" stroke="#a0a0a0" stroke-width="1"/>
<text x="10.2" y="509" text-anchor="middle" font-family="Liberation Serif" font-weight="bold" font-size="13.5" fill="#a0a0a0">0</text>
<path d="M3.5,468.5H16.5V460.5H22.5V462.5H19.5V486.5H22.5V488.5H16.5V481.5H3.5Z" fill="#004284" stroke="#8c4600" stroke-width="1"/>
<text x="10.2" y="479" text-anchor="middle" font-family="Liberation Serif" font-weight="bold" font-size="13.5" fill="#8c4600">1</text>
<path d="M3.5,438.5H16.5V430.5H22.5V432.5H19.5V456.5H22.5V458.5H16.5V451.5H3.5Z" fill="#004284" stroke="#ff0000" stroke-width="1"/>
<text x="10.3" y="448.7" text-anchor="middle" font-family="Liberation Sans" font-size="12" fill="#ff0000" stroke="#ff0000" stroke-width="0.3">2</text>
<path d="M3.5,408.5H16.5V400.5H22.5V402.5H19.5V426.5H22.5V428.5H16.5V421.5H3.5Z" fill="#004284" stroke="#ff4000" stroke-width="1"/>
<text x="10.3" y="418.7" text-anchor="middle" font-family="Liberation Sans" font-size="12" fill="#ff4000" stroke="#ff4000" stroke-width="0.3">3</text>
<path d="M3.5,378.5H16.5V370.5H22.5V372.5H19.5V396.5H22.5V398.5H16.5V391.5H3.5Z" fill="#004284" stroke="#ffcc00" stroke-width="1"/>
<text x="10.2" y="389" text-anchor="middle" font-family="Liberation Serif" font-weight="bold" font-size="13.5" fill="#ffcc00">4</text>
<path d="M3.5,348.5H16.5V340.5H22.5V342.5H19.5V366.5H22.5V368.5H16.5V361.5H3.5Z" fill="#004284" stroke="#00ee00" stroke-width="1"/>
<text x="10.2" y="359" text-anchor="middle" font-family="Liberation Serif" font-weight="bold" font-size="13.5" fill="#00ee00">5</text>
<path d="M3.5,318.5H16.5V310.5H22.5V312.5H19.5V336.5H22.5V338.5H16.5V331.5H3.5Z" fill="#004284" stroke="#00ffff" stroke-width="1"/>
<text x="10.2" y="329" text-anchor="middle" font-family="Liberation Serif" font-weight="bold" font-size="13.5" fill="#00ffff">6</text>
<path d="M3.5,288.5H16.5V280.5H22.5V282.5H19.5V306.5H22.5V308.5H16.5V301.5H3.5Z" fill="#004284" stroke="#a400a4" stroke-width="1"/>
<text x="10.2" y="299" text-anchor="middle" font-family="Liberation Serif" font-weight="bold" font-size="13.5" fill="#a400a4">7</text>
<path d="M3.5,189.5H18.5L22.5,195.5L18.5,201.5H3.5Z" fill="#004284" stroke="#ffd000" stroke-width="1"/>
<text x="11" y="200" text-anchor="middle" font-family="Liberation Sans" font-weight="bold" font-size="12" fill="#ffd000">1</text>
</g>
<g shape-rendering="geometricPrecision">
<rect x="1.5" y="521.5" width="418" height="19" rx="6" fill="#000" stroke="#fff" stroke-width="1"/>
<rect x="425.5" y="521.5" width="167" height="19" rx="6" fill="#000" stroke="#fff" stroke-width="1"/>
<rect x="599.5" y="521.5" width="175" height="19" rx="6" fill="#000" stroke="#fff" stroke-width="1"/>
<circle cx="9.8" cy="530.5" r="7" fill="#ffd000"/>
<text x="9.8" y="536" text-anchor="middle" font-family="Liberation Sans" font-weight="bold" font-size="14" fill="#000">1</text>
<path d="M30.3,527.5h14v2h-14zM30.3,531h3.5v1.5h-3.5zM35.3,531h4v1.5h-4zM40.8,531h3.5v1.5h-3.5z" fill="#ffd000"/>
<text x="74.8" y="536.5" text-anchor="middle" font-family="Liberation Mono" font-size="14" fill="#ffd000" textLength="15.4" lengthAdjust="spacingAndGlyphs">2V</text>
<circle cx="116.8" cy="530.5" r="7" fill="#484848"/>
<text x="116.8" y="536" text-anchor="middle" font-family="Liberation Sans" font-weight="bold" font-size="14" fill="#000">2</text>
<path d="M137.3,527.5h14v2h-14zM137.3,531h3.5v1.5h-3.5zM142.3,531h4v1.5h-4zM147.8,531h3.5v1.5h-3.5z" fill="#484848"/>
<text x="181.8" y="536.5" text-anchor="middle" font-family="Liberation Mono" font-size="14" fill="#505050" textLength="38.5" lengthAdjust="spacingAndGlyphs">100mV</text>
<circle cx="223.8" cy="530.5" r="7" fill="#484848"/>
<text x="223.8" y="536" text-anchor="middle" font-family="Liberation Sans" font-weight="bold" font-size="14" fill="#000">3</text>
<path d="M244.3,527.5h14v2h-14zM244.3,531h3.5v1.5h-3.5zM249.3,531h4v1.5h-4zM254.8,531h3.5v1.5h-3.5z" fill="#484848"/>
<text x="288.8" y="536.5" text-anchor="middle" font-family="Liberation Mono" font-size="14" fill="#505050" textLength="38.5" lengthAdjust="spacingAndGlyphs">100mV</text>
<circle cx="330.8" cy="530.5" r="7" fill="#484848"/>
<text x="330.8" y="536" text-anchor="middle" font-family="Liberation Sans" font-weight="bold" font-size="14" fill="#000">4</text>
<path d="M351.3,527.5h14v2h-14zM351.3,531h3.5v1.5h-3.5zM356.3,531h4v1.5h-4zM361.8,531h3.5v1.5h-3.5z" fill="#484848"/>
<text x="395.8" y="536.5" text-anchor="middle" font-family="Liberation Mono" font-size="14" fill="#505050" textLength="38.5" lengthAdjust="spacingAndGlyphs">100mV</text>
<text x="454" y="536.5" font-family="Liberation Mono" font-size="14" fill="#fff" textLength="31" lengthAdjust="spacingAndGlyphs">50us</text>
<rect x="499" y="524" width="14" height="14" rx="3" fill="#fff"/>
<path d="M502,526h2.5v4h3v-4h2.5v10h-2.5v-4h-3v4h-2.5z" fill="#000"/>
<text x="532.5" y="536.5" font-family="Liberation Mono" font-size="14" fill="#fff" textLength="46" lengthAdjust="spacingAndGlyphs">0.000s</text>
<path d="M610.5,527.5l5.5,7M616,527.5l-5.5,7" stroke="#505050" stroke-width="1.9" fill="none"/>
<path d="M619.5,527.5l5.5,7M625,527.5l-5.5,7" stroke="#505050" stroke-width="1.9" fill="none"/>
<path d="M628.5,527.5l5.5,7M634,527.5l-5.5,7" stroke="#505050" stroke-width="1.9" fill="none"/>
<path d="M637.5,527.5l5.5,7M643,527.5l-5.5,7" stroke="#505050" stroke-width="1.9" fill="none"/>
<path d="M651.5,527.5l5.5,7M657,527.5l-5.5,7" stroke="#505050" stroke-width="1.9" fill="none"/>
<path d="M660.5,527.5l5.5,7M666,527.5l-5.5,7" stroke="#505050" stroke-width="1.9" fill="none"/>
<path d="M669.5,527.5l5.5,7M675,527.5l-5.5,7" stroke="#505050" stroke-width="1.9" fill="none"/>
<path d="M678.5,527.5l5.5,7M684,527.5l-5.5,7" stroke="#505050" stroke-width="1.9" fill="none"/>
<path d="M692.5,527.5l5.5,7M698,527.5l-5.5,7" stroke="#a400a4" stroke-width="1.9" fill="none"/>
<path d="M701.5,527.5l5.5,7M707,527.5l-5.5,7" stroke="#00ffff" stroke-width="1.9" fill="none"/>
<path d="M710.5,527.5l5.5,7M716,527.5l-5.5,7" stroke="#00ee00" stroke-width="1.9" fill="none"/>
<path d="M719.5,527.5l5.5,7M725,527.5l-5.5,7" stroke="#ffcc00" stroke-width="1.9" fill="none"/>
<path d="M733.5,527.5l5.5,7M739,527.5l-5.5,7" stroke="#ff4000" stroke-width="1.9" fill="none"/>
<path d="M742.5,527.5l5.5,7M748,527.5l-5.5,7" stroke="#ff0000" stroke-width="1.9" fill="none"/>
<path d="M751.5,527.5l5.5,7M757,527.5l-5.5,7" stroke="#8c4600" stroke-width="1.9" fill="none"/>
<path d="M760.5,527.5l5.5,7M766,527.5l-5.5,7" stroke="#a0a0a0" stroke-width="1.9" fill="none"/>
<rect x="16" y="541" width="110" height="59" rx="5.5" fill="#000088"/><path d="M16.5,545.5V595Q16.5,599.5 21,599.5H121" fill="none" stroke="#000" stroke-width="1"/><path d="M17.5,546V594.5Q17.5,598.5 21.5,598.5H121" fill="none" stroke="#2040c0" stroke-width="1"/><rect x="18.5" y="543.5" width="105" height="54" rx="4" fill="#33ffff" stroke="#33ffff" stroke-width="1"/>
<text x="70.8" y="566.5" text-anchor="middle" font-family="Liberation Sans" font-weight="normal" font-size="15.5" fill="#231815" stroke="#231815" stroke-width="0.6"  textLength="62.4" lengthAdjust="spacingAndGlyphs">D15 - D0</text>
<text x="77.3" y="587.5" text-anchor="middle" font-family="Liberation Sans" font-weight="normal" font-size="15.5" fill="#231815" stroke="#231815" stroke-width="0.6"  textLength="84.6" lengthAdjust="spacingAndGlyphs">Вкл / Выкл</text>
<rect x="128" y="541" width="110" height="59" rx="5.5" fill="#000088"/><path d="M128.5,545.5V595Q128.5,599.5 133,599.5H233" fill="none" stroke="#000" stroke-width="1"/><path d="M129.5,546V594.5Q129.5,598.5 133.5,598.5H233" fill="none" stroke="#2040c0" stroke-width="1"/><rect x="130.5" y="543.5" width="105" height="54" rx="4" fill="#3399cc" stroke="#d8ffff" stroke-width="1"/><path d="M130.5,547V593.5Q130.5,597.5 134.5,597.5H232" fill="none" stroke="#70e0d8" stroke-width="1"/>
<text x="183" y="574.7" text-anchor="middle" font-family="Liberation Sans" font-weight="normal" font-size="15.5" fill="#231815" stroke="#231815" stroke-width="0.6"  textLength="48" lengthAdjust="spacingAndGlyphs">Порог</text>
<rect x="352" y="541" width="110" height="59" rx="5.5" fill="#000088"/><path d="M352.5,545.5V595Q352.5,599.5 357,599.5H457" fill="none" stroke="#000" stroke-width="1"/><path d="M353.5,546V594.5Q353.5,598.5 357.5,598.5H457" fill="none" stroke="#2040c0" stroke-width="1"/><rect x="354.5" y="543.5" width="105" height="54" rx="4" fill="#3399cc" stroke="#d8ffff" stroke-width="1"/><path d="M354.5,547V593.5Q354.5,597.5 358.5,597.5H456" fill="none" stroke="#70e0d8" stroke-width="1"/>
<text x="407.6" y="563.1" text-anchor="middle" font-family="Liberation Sans" font-weight="normal" font-size="15.5" fill="#231815" stroke="#231815" stroke-width="0.6"  textLength="100" lengthAdjust="spacingAndGlyphs">Аналоговый</text>
<text x="406.5" y="588" text-anchor="middle" font-family="Liberation Sans" font-weight="normal" font-size="15.5" fill="#231815" stroke="#231815" stroke-width="0.6"  textLength="53" lengthAdjust="spacingAndGlyphs">сигнал</text>
<rect x="464" y="541" width="110" height="59" rx="5.5" fill="#000088"/><path d="M464.5,545.5V595Q464.5,599.5 469,599.5H569" fill="none" stroke="#000" stroke-width="1"/><path d="M465.5,546V594.5Q465.5,598.5 469.5,598.5H569" fill="none" stroke="#2040c0" stroke-width="1"/><rect x="466.5" y="543.5" width="105" height="54" rx="4" fill="#3399cc" stroke="#d8ffff" stroke-width="1"/><path d="M466.5,547V593.5Q466.5,597.5 470.5,597.5H568" fill="none" stroke="#70e0d8" stroke-width="1"/>
<text x="518.5" y="566.5" text-anchor="middle" font-family="Liberation Sans" font-weight="normal" font-size="15.5" fill="#231815" stroke="#231815" stroke-width="0.6"  textLength="71" lengthAdjust="spacingAndGlyphs">Высокий</text>
<rect x="510" y="572" width="19" height="18" rx="4" fill="#ccffff"/>
<text x="491.5" y="587.5" text-anchor="middle" font-family="Liberation Sans" font-weight="normal" font-size="15.5" fill="#231815" stroke="#231815" stroke-width="0.6" >S</text>
<text x="519.7" y="587.5" text-anchor="middle" font-family="Liberation Sans" font-weight="normal" font-size="15.5" fill="#231815" stroke="#231815" stroke-width="0.6" >M</text>
<text x="547" y="587.5" text-anchor="middle" font-family="Liberation Sans" font-weight="normal" font-size="15.5" fill="#231815" stroke="#231815" stroke-width="0.6" >L</text>
<rect x="576" y="541" width="110" height="59" rx="5.5" fill="#000088"/><path d="M576.5,545.5V595Q576.5,599.5 581,599.5H681" fill="none" stroke="#000" stroke-width="1"/><path d="M577.5,546V594.5Q577.5,598.5 581.5,598.5H681" fill="none" stroke="#2040c0" stroke-width="1"/><rect x="578.5" y="543.5" width="105" height="54" rx="4" fill="#3399cc" stroke="#d8ffff" stroke-width="1"/><path d="M578.5,547V593.5Q578.5,597.5 582.5,597.5H680" fill="none" stroke="#70e0d8" stroke-width="1"/>
<text x="630.3" y="558.5" text-anchor="middle" font-family="Liberation Sans" font-weight="normal" font-size="15.5" fill="#231815" stroke="#231815" stroke-width="0.75"  textLength="62.6" lengthAdjust="spacingAndGlyphs">Частота</text>
<text x="631.5" y="571.7" text-anchor="middle" font-family="Liberation Sans" font-weight="normal" font-size="15.5" fill="#231815" stroke="#231815" stroke-width="0.75"  textLength="51" lengthAdjust="spacingAndGlyphs">дискр.</text>
<text x="630.5" y="589" text-anchor="middle" font-family="Liberation Mono" font-weight="normal" font-size="14.5" fill="#3366cc"  textLength="47" lengthAdjust="spacingAndGlyphs">500MHz</text>
<rect x="688" y="541" width="110" height="59" rx="5.5" fill="#000088"/><path d="M688.5,545.5V595Q688.5,599.5 693,599.5H793" fill="none" stroke="#000" stroke-width="1"/><path d="M689.5,546V594.5Q689.5,598.5 693.5,598.5H793" fill="none" stroke="#2040c0" stroke-width="1"/><rect x="690.5" y="543.5" width="105" height="54" rx="4" fill="#3399cc" stroke="#d8ffff" stroke-width="1"/><path d="M690.5,547V593.5Q690.5,597.5 694.5,597.5H792" fill="none" stroke="#70e0d8" stroke-width="1"/>
<text x="743" y="574.3" text-anchor="middle" font-family="Liberation Sans" font-weight="normal" font-size="15.5" fill="#231815" stroke="#231815" stroke-width="0.6"  textLength="46.5" lengthAdjust="spacingAndGlyphs">Назад</text>
</g>
</svg>
</body></html>
